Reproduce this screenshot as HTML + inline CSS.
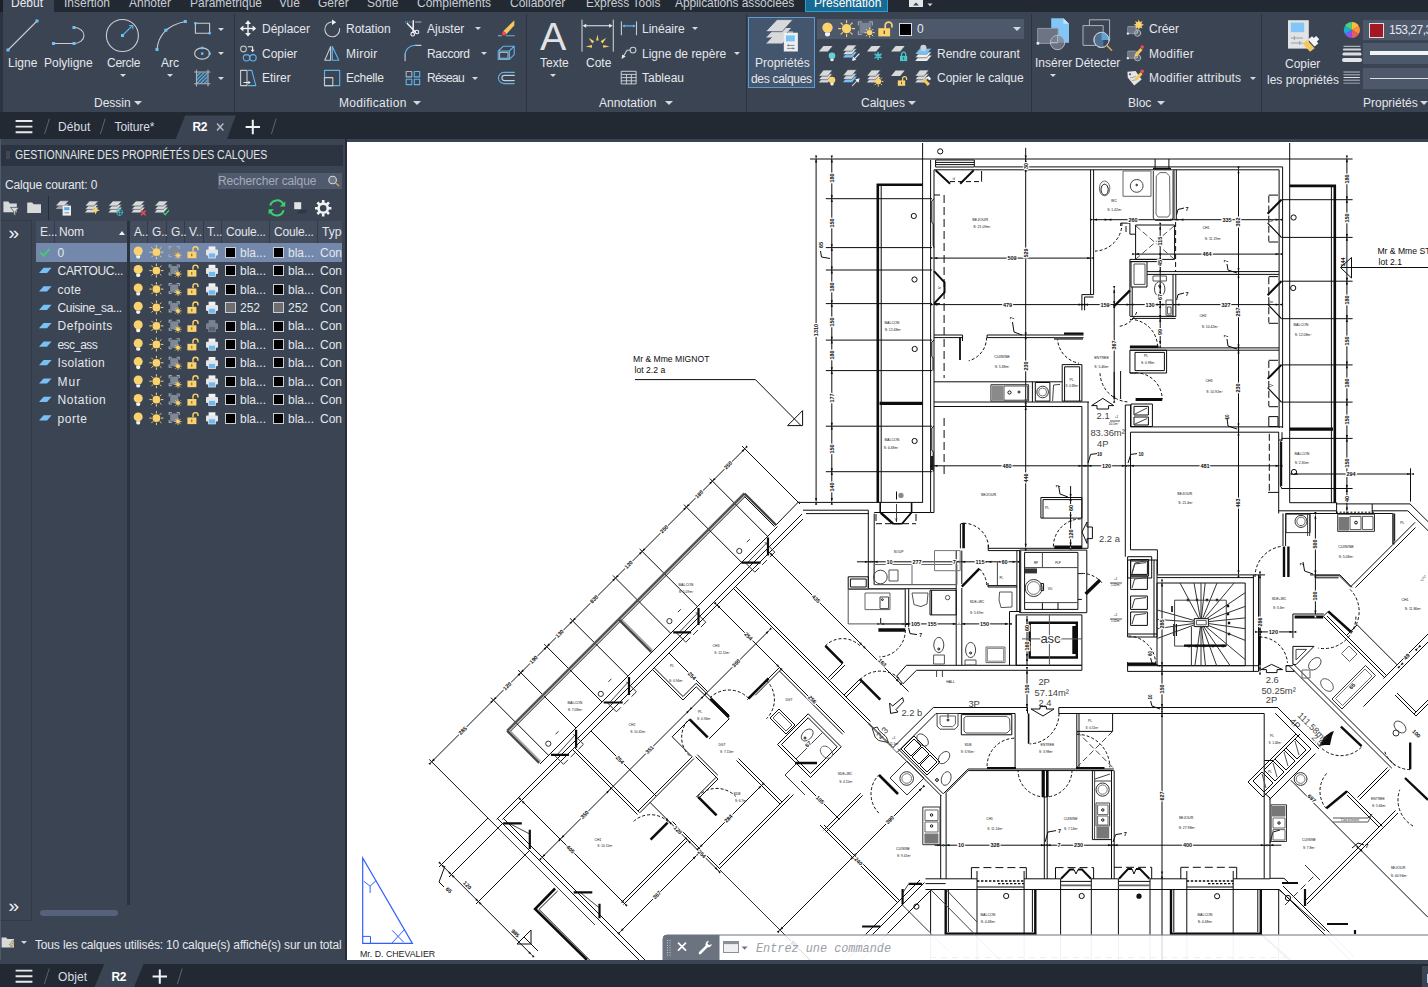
<!DOCTYPE html>
<html lang="fr">
<head>
<meta charset="utf-8">
<title>AutoCAD - R2</title>
<style>
*{box-sizing:border-box;margin:0;padding:0}
html,body{width:1428px;height:987px;overflow:hidden;background:#3b4453}
body{position:relative;font-family:"Liberation Sans",sans-serif;font-size:12px;color:#e4e7eb;line-height:14px}
.abs,.t,.ic{position:absolute}
.t{white-space:nowrap;height:14px;line-height:14px;margin-top:.35px}
#tabrow{position:absolute;left:0;top:0;width:1428px;height:12px;background:#222933;overflow:hidden}
#tabrow .t{top:-4.6px;color:#c9cdd3}
#ribbon{position:absolute;left:0;top:12px;width:1428px;height:100px;background:#3b4453}
#filebar{position:absolute;left:0;top:112px;width:1428px;height:27px;background:#222933}
#palette{position:absolute;left:0;top:139px;width:347px;height:821px;background:#3b4453}
#draw{position:absolute;left:347px;top:142px;width:1081px;height:818px;background:#fff;overflow:hidden}
#layoutbar{position:absolute;left:0;top:960px;width:1428px;height:27px;background:#222933}
.sep{position:absolute;width:1px;background:#2b3340}
.dd{position:absolute;width:0;height:0;border-left:3px solid transparent;border-right:3px solid transparent;border-top:3px solid #d5d9de}
.dd4{position:absolute;width:0;height:0;border-left:4px solid transparent;border-right:4px solid transparent;border-top:4px solid #d5d9de}
svg{position:absolute;overflow:visible}
</style>
</head>
<body>

<!-- ribbon tab row (cropped at top) -->
<div id="tabrow">
  <div class="abs" style="left:3px;top:0;width:51px;height:12px;background:#3b4453"></div>
  <div class="abs" style="left:0;top:0;width:3px;height:12px;background:#1b2028"></div>
  <span class="t" style="left:11px;color:#e8eaee">Début</span>
  <span class="t" style="left:64px">Insertion</span>
  <span class="t" style="left:129px">Annoter</span>
  <span class="t" style="left:190px">Paramétrique</span>
  <span class="t" style="left:279px">Vue</span>
  <span class="t" style="left:318px">Gérer</span>
  <span class="t" style="left:367px">Sortie</span>
  <span class="t" style="left:417px">Compléments</span>
  <span class="t" style="left:510px">Collaborer</span>
  <span class="t" style="left:586px">Express Tools</span>
  <span class="t" style="left:675px;letter-spacing:-.1px">Applications associées</span>
  <div class="abs" style="left:805px;top:-3px;width:83px;height:15px;background:#166a93;border:1px solid #2a9fd6"></div>
  <span class="t" style="left:814px;color:#fff">Présentation</span>
</div>

<div id="ribbon">
<div class="abs" id="rb" style="left:0;top:-12px;width:1428px;height:112px">
<!-- panel separators -->
<div class="sep" style="left:234px;top:14px;height:98px"></div>
<div class="sep" style="left:526px;top:14px;height:98px"></div>
<div class="sep" style="left:746px;top:14px;height:98px"></div>
<div class="sep" style="left:1031px;top:14px;height:98px"></div>
<div class="sep" style="left:1261px;top:14px;height:98px"></div>
<div class="abs" style="left:0;top:12px;width:3px;height:100px;background:#2b3340"></div>

<!-- Dessin -->
<span class="t" style="left:8px;top:56px">Ligne</span>
<span class="t" style="left:44px;top:56px">Polyligne</span>
<span class="t" style="left:107px;top:56px;letter-spacing:-0.25px">Cercle</span>
<span class="t" style="left:161px;top:56px">Arc</span>
<i class="dd" style="left:120px;top:74px"></i>
<i class="dd" style="left:167px;top:74px"></i>
<i class="dd" style="left:218px;top:28px"></i>
<i class="dd" style="left:218px;top:52px"></i>
<i class="dd" style="left:218px;top:77px"></i>
<span class="t" style="left:94px;top:96px">Dessin</span>
<i class="dd4" style="left:134px;top:101px"></i>

<!-- Modification -->
<span class="t" style="left:262px;top:22px">Déplacer</span>
<span class="t" style="left:262px;top:47px">Copier</span>
<span class="t" style="left:262px;top:71px">Etirer</span>
<span class="t" style="left:346px;top:22px">Rotation</span>
<span class="t" style="left:346px;top:47px;letter-spacing:0.25px">Miroir</span>
<span class="t" style="left:346px;top:71px;letter-spacing:-0.25px">Echelle</span>
<span class="t" style="left:427px;top:22px">Ajuster</span>
<span class="t" style="left:427px;top:47px;letter-spacing:-0.3px">Raccord</span>
<span class="t" style="left:427px;top:71px;letter-spacing:-0.75px">Réseau</span>
<i class="dd" style="left:475px;top:27px"></i>
<i class="dd" style="left:481px;top:52px"></i>
<i class="dd" style="left:472px;top:77px"></i>
<span class="t" style="left:339px;top:96px;letter-spacing:.3px">Modification</span>
<i class="dd4" style="left:413px;top:101px"></i>

<!-- Annotation -->
<span class="t" style="left:540px;top:56px">Texte</span>
<i class="dd" style="left:550px;top:74px"></i>
<span class="t" style="left:586px;top:56px">Cote</span>
<span class="t" style="left:642px;top:22px">Linéaire</span>
<span class="t" style="left:642px;top:47px">Ligne de repère</span>
<span class="t" style="left:642px;top:71px">Tableau</span>
<i class="dd" style="left:692px;top:27px"></i>
<i class="dd" style="left:734px;top:52px"></i>
<span class="t" style="left:599px;top:96px">Annotation</span>
<i class="dd4" style="left:665px;top:101px"></i>

<!-- Calques -->
<div class="abs" style="left:748px;top:17px;width:67px;height:71px;background:#44566e;border:1px solid #5b9bd1"></div>
<span class="t" style="left:755px;top:56px">Propriétés</span>
<span class="t" style="left:751px;top:72px;letter-spacing:-0.3px">des calques</span>
<div class="abs" style="left:817px;top:19px;width:207px;height:20px;background:#4d586b"></div>
<div class="abs" style="left:899px;top:23px;width:13px;height:13px;background:#000;border:1px solid #d9dce0"></div>
<span class="t" style="left:917px;top:22px">0</span>
<i class="dd4" style="left:1013px;top:27px"></i>
<span class="t" style="left:937px;top:47px">Rendre courant</span>
<span class="t" style="left:937px;top:71px">Copier le calque</span>
<span class="t" style="left:861px;top:96px">Calques</span>
<i class="dd4" style="left:908px;top:101px"></i>

<!-- Bloc -->
<span class="t" style="left:1035px;top:56px">Insérer</span>
<i class="dd" style="left:1050px;top:74px"></i>
<span class="t" style="left:1075px;top:56px">Détecter</span>
<span class="t" style="left:1149px;top:22px">Créer</span>
<span class="t" style="left:1149px;top:47px;letter-spacing:0.3px">Modifier</span>
<span class="t" style="left:1149px;top:71px;letter-spacing:0.2px">Modifier attributs</span>
<i class="dd" style="left:1250px;top:77px"></i>
<span class="t" style="left:1128px;top:96px">Bloc</span>
<i class="dd4" style="left:1157px;top:101px"></i>

<!-- Propriétés -->
<span class="t" style="left:1285px;top:57px">Copier</span>
<span class="t" style="left:1267px;top:73px">les propriétés</span>
<div class="abs" style="left:1363px;top:20px;width:70px;height:20px;background:#4d586b"></div>
<div class="abs" style="left:1369px;top:23px;width:15px;height:15px;background:#a31822;border:1px solid #d9dce0"></div>
<span class="t" style="left:1389px;top:23px;letter-spacing:-0.5px">153,27,30</span>
<div class="abs" style="left:1363px;top:43px;width:70px;height:21px;background:#4d586b"></div>
<div class="abs" style="left:1370px;top:51px;width:60px;height:4px;background:#f2f3f5"></div>
<div class="abs" style="left:1363px;top:68px;width:70px;height:21px;background:#4d586b"></div>
<div class="abs" style="left:1370px;top:78px;width:60px;height:1px;background:#d9dce0"></div>
<span class="t" style="left:1363px;top:96px">Propriétés</span>
<i class="dd4" style="left:1420px;top:101px"></i>

<svg width="1428" height="112" style="left:0;top:0" viewBox="0 0 1428 112" fill="none" stroke-linecap="round" stroke-linejoin="round">
<defs>
<pattern id="hat" width="2.6" height="2.6" patternUnits="userSpaceOnUse" patternTransform="rotate(-45)"><rect width="2.6" height="1.3" fill="#5fb4ec"/></pattern>
</defs>
<g id="dessin" stroke="#c9cdd3" stroke-width="1.1">
  <path d="M8 50 L37 21"/>
  <path d="M53.5 43.5 H74 A10 8 0 0 0 74 27.5"/>
  <circle cx="122.4" cy="35.5" r="16"/>
  <path d="M122.4 35.5 L132 26" stroke="#5fb4ec"/>
  <path d="M129.5 25.5 h3.3 v3.3" stroke="#5fb4ec"/>
  <path d="M157 49.5 Q159 27 185.3 21.5"/>
  <rect x="195.4" y="23.2" width="14.2" height="10"/>
  <ellipse cx="202.1" cy="53.5" rx="7.5" ry="5.6"/>
  <rect x="197" y="72.5" width="10.5" height="11" fill="url(#hat)" stroke="none"/>
  <path d="M196.5 70 V86 M208 70 V86 M194.5 72 H210 M194.5 83.8 H210" stroke="#aeb3bb"/>
</g>
<g id="grips" fill="#6cc2f7" stroke="none">
  <rect x="6.5" y="48.5" width="3" height="3"/><rect x="35.5" y="19.5" width="3" height="3"/>
  <rect x="52" y="42" width="3" height="3"/><rect x="72.5" y="42" width="3" height="3"/><rect x="72.5" y="26" width="3" height="3"/>
  <rect x="121" y="34" width="3" height="3"/>
  <rect x="155.5" y="48" width="3" height="3"/><rect x="164.3" y="28.7" width="3" height="3"/><rect x="183.8" y="20" width="3" height="3"/>
  <rect x="194.2" y="22" width="2.4" height="2.4"/><rect x="208.4" y="32" width="2.4" height="2.4"/>
  <rect x="201" y="52.4" width="2.4" height="2.4"/><rect x="208.4" y="52.4" width="2.4" height="2.4"/><rect x="201" y="46.8" width="2.4" height="2.4"/>
</g>
<g id="modif" stroke-width="1.1">
  <!-- move -->
  <g fill="#f1f2f4" stroke="none">
    <rect x="247.3" y="22.5" width="1.4" height="12"/><rect x="242" y="27.8" width="12" height="1.4"/>
    <path d="M248 20.3 l3 3.6 h-6z M248 36.5 l3 -3.6 h-6z M239.8 28.5 l3.6 -3 v6z M256.2 28.5 l-3.6 -3 v6z"/>
  </g>
  <!-- copy -->
  <circle cx="243.5" cy="49" r="2.9" stroke="#b9bec6"/>
  <path d="M248.3 46.8 H252.6 V50.5" stroke="#e8eaed"/>
  <path d="M252.6 52.3 l-2 -2.6 h4z" fill="#e8eaed" stroke="none"/>
  <circle cx="246.5" cy="57.8" r="3.2" stroke="#5fb4ec"/><circle cx="253" cy="57.8" r="3.2" stroke="#5fb4ec"/>
  <!-- stretch -->
  <path d="M240.6 70.4 H247 V85.6 H240.6 Z" stroke="#c9cdd3"/>
  <path d="M248.4 70.4 H251.8 L255.8 85.6 H248.4" stroke="#5fb4ec"/>
  <path d="M244 82.5 H249" stroke="#e8eaed"/><path d="M250.8 82.5 l-2.4 -1.8 v3.6z" fill="#e8eaed" stroke="none"/>
  <!-- rotate -->
  <path d="M339.6 28.6 A7.4 7.4 0 1 1 332.3 22" stroke="#c9cdd3"/>
  <path d="M332 19.6 l4.2 2.6 -4.2 2.8z" fill="#f1f2f4" stroke="none"/>
  <!-- mirror -->
  <path d="M330.6 46.6 V60.2 H324.8 Z" stroke="#c9cdd3"/>
  <path d="M332.3 46.6 V60.2 H338.8 Z" stroke="#5fb4ec"/>
  <!-- scale -->
  <rect x="324.5" y="70.4" width="15.2" height="15.2" stroke="#5fb4ec"/>
  <rect x="324.5" y="77.6" width="8.3" height="8" stroke="#c9cdd3" fill="#3b4453"/>
  <!-- trim -->
  <path d="M405 22 H411.5" stroke="#5fb4ec" stroke-dasharray="1.2 0.8" stroke-linecap="butt"/>
  <path d="M415.6 22 H421" stroke="#aeb3bb"/>
  <path d="M407.3 23.6 L415.6 32.2 M413.3 20.8 L413.1 32.2" stroke="#f1f2f4" stroke-width="1.5"/>
  <circle cx="412.7" cy="34.2" r="1.8" stroke="#f1f2f4"/><circle cx="417" cy="32" r="1.8" stroke="#f1f2f4"/>
  <!-- fillet -->
  <path d="M415.2 45.4 H421 M405.1 54.5 V60.8" stroke="#c9cdd3"/>
  <path d="M415.2 45.4 A10 9 0 0 0 405.1 54.5" stroke="#5fb4ec"/>
  <!-- array -->
  <rect x="406.2" y="71.5" width="5.6" height="5.4" stroke="#aeb3bb"/>
  <rect x="414.3" y="71.5" width="5.4" height="5.4" stroke="#5fb4ec"/>
  <rect x="406.2" y="79.2" width="5.6" height="5.4" stroke="#5fb4ec"/>
  <rect x="414.3" y="79.2" width="5.4" height="5.4" stroke="#5fb4ec"/>
  <!-- erase -->
  <path d="M514.3 20.2 V25.6 L506.2 34.2 L503.2 31.2 Z" fill="#f5c85a" stroke="none"/>
  <circle cx="504" cy="33.4" r="2" fill="#ef4a55" stroke="none"/>
  <path d="M498.4 35.8 H501.4" stroke="#aeb3bb"/><path d="M506.2 35.8 H514.3" stroke="#5fb4ec"/>
  <!-- box -->
  <path d="M498.2 51 L503.4 46.2 H514.2 V54.6 L509.4 59.4 H498.2 Z M509.4 59.4 V51 H498.2 M509.4 51 L514.2 46.2" stroke="#5fb4ec"/>
  <rect x="499.6" y="52.4" width="8.4" height="5.8" stroke="#aeb3bb"/>
  <!-- offset -->
  <path d="M514.3 72.4 H504 A5.6 5.6 0 0 0 504 83.6 H514.3" stroke="#5fb4ec"/>
  <path d="M514.3 75.4 H504.5 A2.6 2.6 0 0 0 504.5 80.6 H514.3" stroke="#c9cdd3"/>
</g>
<g id="annot" stroke-width="1.1">
  <!-- cote -->
  <path d="M582 20 V51.3 M613.3 20 V51.3" stroke="#c9cdd3"/>
  <path d="M585 25.8 H610.5" stroke="#e8eaed"/>
  <path d="M582.6 25.8 l3.6 -2 v4z M612.7 25.8 l-3.6 -2 v4z" fill="#e8eaed" stroke="none"/>
  <g fill="#f7cf62" stroke="none">
    <path d="M597.4 34.6 l1.3 6 h-2.6z"/>
    <path d="M588.6 37.8 l5.6 3.4 -2 2.2z"/><path d="M606.2 37.8 l-5.6 3.4 2 2.2z"/>
    <path d="M585.6 46.4 l6.4 -1.4 v2.8z"/><path d="M609.6 46.4 l-6.4 -1.4 v2.8z"/>
  </g>
  <!-- lineaire -->
  <path d="M621.4 21.8 V34.8 M636.5 21.8 V34.8" stroke="#c9cdd3"/>
  <path d="M623.5 25.9 H634.5" stroke="#5fb4ec"/>
  <path d="M622.2 25.9 l2.6 -1.5 v3z M635.7 25.9 l-2.6 -1.5 v3z" fill="#5fb4ec" stroke="none"/>
  <!-- leader -->
  <circle cx="633" cy="50.1" r="2.9" stroke="#c9cdd3"/>
  <path d="M630 50.3 H627 L623.6 56" stroke="#c9cdd3"/>
  <path d="M621.6 59 l0.6 -4.6 3.4 2.2z" fill="#e8eaed" stroke="none"/>
  <!-- table -->
  <g stroke="#c9cdd3" stroke-width="1">
  <rect x="621.6" y="71.3" width="14.5" height="12.6"/>
  <path d="M621.6 74.4 H636 M621.6 77.6 H636 M621.6 80.8 H636 M626.4 74.4 V83.8 M631.3 74.4 V83.8"/>
  </g>
</g>
<g id="calq" stroke="none">
  <!-- layer properties big icon -->
  <g fill="#d8d9db">
    <path d="M765.8 43.6 l9 -9.6 h16.4 l-9 9.6z"/>
    <path d="M765.8 37.6 l9 -9.6 h16.4 l-9 9.6z"/>
    <path d="M765.8 31.4 l11.2 -11.8 h16 l-10.6 11.8z" stroke="#44566e" stroke-width=".8"/>
  </g>
  <path d="M765.8 37.6 l5.6 -6 M765.8 43.6 l5.6 -6" stroke="#44566e" stroke-width=".8"/>
  <rect x="783.8" y="32.7" width="14.1" height="18.8" fill="#eceef0"/>
  <rect x="788" y="31.4" width="5" height="1.6" fill="#b8bcc3"/>
  <rect x="786" y="35.4" width="8.8" height="6" fill="#79c2f8"/>
  <path d="M787.4 45.4 H794.2 M787.4 48.4 H794.2" stroke="#6b7280" stroke-width=".8"/>
  <path d="M787.2 45.4 l1.8 -1.2 v2.4z M794.4 48.4 l-1.8 -1.2 v2.4z" fill="#6b7280"/>
  <!-- dropdown row: bulb, sun, vp-freeze, lock -->
  <circle cx="827.5" cy="27.6" r="5.2" fill="#fbd36e"/>
  <path d="M825 32.6 h5 v2 a2.5 2 0 0 1 -5 0z" fill="#f1f2f4"/>
  <g id="sunL"><circle cx="846.6" cy="28.6" r="4.7" fill="#fbd36e"/>
  <path d="M846.6 20.6 v2.2 M846.6 34.4 v2.2 M838.6 28.6 h2.2 M852.4 28.6 h2.2 M841 23 l1.6 1.6 M850.6 32.6 l1.6 1.6 M852.2 23 l-1.6 1.6 M842.6 32.6 l-1.6 1.6" stroke="#fbd36e" stroke-width="1.1" stroke-linecap="round"/></g>
  <rect x="859.6" y="22.8" width="11.6" height="10.6" fill="#7b8392"/>
  <path d="M858.4 25 V21.8 H861.6 M869.2 21.8 H872.4 V25 M858.4 31.4 V34.5 H861.6" stroke="#9aa1ad" stroke-width="1.2" fill="none"/>
  <circle cx="869.6" cy="32.6" r="2.7" fill="#fbd36e"/>
  <path d="M869.6 28 v1.2 M869.6 36 v1.2 M865 32.6 h1.2 M873 32.6 h1.2 M866.4 29.4 l.9 .9 M872 35 l.9 .9 M872.9 29.4 l-.9 .9 M867.2 35 l-.9 .9" stroke="#fbd36e" stroke-width="1" stroke-linecap="round"/>
  <rect x="878.3" y="28.2" width="11.8" height="8.2" fill="#fbd36e"/>
  <rect x="883.6" y="30.6" width="1.3" height="3.4" fill="#5a5030"/>
  <path d="M885.2 28 V25.6 A3.4 3.4 0 0 1 892 25.6 V26.8" stroke="#fbd36e" stroke-width="1.7" fill="none"/>
  <!-- row 2 -->
  <path d="M818.8 51.5 l4.6 -5.6 h9.1 l-4.6 5.6z" fill="#d8d9db"/>
  <circle cx="832" cy="55.7" r="3.3" fill="#5fd3d8"/><path d="M830.4 58.8 h3.2 v1.2 a1.6 1.2 0 0 1 -3.2 0z" fill="#f1f2f4"/>
  <g id="stk2"><path d="M843 57.6 l4.6 -5.6 h9.1 l-4.6 5.6z" fill="#79c2f8"/><path d="M843 54.4 l4.6 -5.6 h9.1 l-4.6 5.6z" fill="#d8d9db" stroke="#3b4453" stroke-width=".6"/><path d="M843 50.9 l4.6 -5.8 h9.1 l-4.6 5.8z" fill="#d8d9db" stroke="#3b4453" stroke-width=".6"/></g>
  <path d="M859 54 L853.6 59.6" stroke="#e8eaed" stroke-width="1.1"/><path d="M852 61 l1 -4.4 3.4 3.2z" fill="#e8eaed"/>
  <path d="M866.9 51.5 l4.6 -5.6 h9.1 l-4.6 5.6z" fill="#d8d9db"/>
  <path d="M878.1 52.4 v7 M875 54.2 l6.2 3.6 M881.2 54.2 l-6.2 3.6" stroke="#49c5cd" stroke-width="1.4"/><circle cx="878.1" cy="55.9" r="2" fill="none" stroke="#49c5cd" stroke-width="1"/>
  <path d="M891 51.5 l4.6 -5.6 h9.1 l-4.6 5.6z" fill="#d8d9db"/>
  <rect x="900" y="55.9" width="7.2" height="5.2" fill="#49c5cd"/><path d="M901.6 55.8 V54.2 A2 2 0 0 1 905.6 54.2 V55.8" stroke="#49c5cd" stroke-width="1.2" fill="none"/><rect x="903.2" y="57.2" width=".9" height="2.4" fill="#24545a"/>
  <path d="M915.2 60.9 l4.5 -5.5 h11.9 l-4.6 5.5z" fill="#eceef0"/><path d="M915.2 57.5 l4.5 -5.5 h11.9 l-4.6 5.5z" fill="#eceef0" stroke="#3b4453" stroke-width=".6"/><path d="M915.2 54.1 l4.5 -5.5 h11.9 l-4.6 5.5z" fill="#79c2f8" stroke="#3b4453" stroke-width=".4"/>
  <circle cx="923.4" cy="47.9" r="3.1" fill="#d0d2d5"/>
  <!-- row 3 -->
  <g id="stk3"><path d="M818.8 82.6 l4.6 -5.6 h9.1 l-4.6 5.6z" fill="#d8d9db"/><path d="M818.8 79.4 l4.6 -5.6 h9.1 l-4.6 5.6z" fill="#d8d9db" stroke="#3b4453" stroke-width=".6"/><path d="M818.8 75.9 l4.6 -5.8 h9.1 l-4.6 5.8z" fill="#d8d9db" stroke="#3b4453" stroke-width=".6"/></g>
  <circle cx="832" cy="80" r="3.3" fill="#fbd36e"/><path d="M830.4 83.1 h3.2 v1.2 a1.6 1.2 0 0 1 -3.2 0z" fill="#f1f2f4"/>
  <use href="#stk2" y="24.6"/>
  <path d="M852.4 85.6 L858 79.8" stroke="#c9cdd3" stroke-width="1.1"/><path d="M859.6 78.2 l-1 4.6 -3.6 -3.4z" fill="#f1f2f4"/>
  <use href="#stk3" x="48.1"/>
  <circle cx="878.3" cy="81.4" r="2.8" fill="#fbd36e"/>
  <path d="M878.3 76.6 v1.3 M878.3 84.9 v1.3 M873.5 81.4 h1.3 M881.8 81.4 h1.3 M874.9 78 l.9 .9 M880.8 83.9 l.9 .9 M881.7 78 l-.9 .9 M875.8 83.9 l-.9 .9" stroke="#fbd36e" stroke-width="1" stroke-linecap="round"/>
  <path d="M891 76.1 l4.6 -5.6 h9.1 l-4.6 5.6z" fill="#d8d9db"/>
  <rect x="897.8" y="80.4" width="7.4" height="5.4" fill="#fbd36e"/><path d="M902.6 80.3 V78.6 A2 2 0 0 1 906.6 78.6 V79.4" stroke="#fbd36e" stroke-width="1.2" fill="none"/><rect x="901" y="81.8" width=".9" height="2.4" fill="#5a5030"/>
  <use href="#stk3" x="96.4"/>
  <path d="M922.4 80.2 l2.2 -2 5.4 5.6 -2.4 2.2z" fill="#f5c85a"/><path d="M926.6 77.4 l2.2 -1.4 2.4 3 -2 1.2z" fill="#f1f2f4"/>
</g>
<text x="540" y="49.5" font-family="Liberation Sans, sans-serif" font-size="39.4" fill="#e1e2e4" stroke="none">A</text>
<g id="bloc" stroke-width="1">
  <!-- inserer -->
  <path d="M1051.2 18.2 H1063.4 L1069 23.8 V42.8 H1051.2 Z" fill="#82c6f8" stroke="none"/>
  <path d="M1063.4 18.2 V23.8 H1069 Z" fill="#c4e4fb" stroke="none"/>
  <rect x="1038" y="28.4" width="20" height="15" fill="#6d7483" stroke="#9097a3"/>
  <circle cx="1057.6" cy="42.5" r="7.2" fill="#7b8290" fill-opacity=".75" stroke="#b4b9c1"/>
  <path d="M1050.4 42.5 H1057.6 V35.3" stroke="#b4b9c1" fill="none"/>
  <rect x="1036.6" y="42" width="2.6" height="2.6" fill="#f1f2f4" stroke="none"/>
  <!-- detecter -->
  <rect x="1089.8" y="19.8" width="19.8" height="20.6" stroke="#aeb3bb" fill="#3b4453"/>
  <rect x="1083.4" y="25.6" width="19.8" height="19.8" stroke="#aeb3bb" fill="#444c5b"/>
  <path d="M1107 45.6 L1111.6 50.2" stroke="#d9a64e" stroke-width="1.6"/>
  <circle cx="1101.5" cy="39.9" r="7.6" fill="#4f6f93" stroke="#c4c8ce"/>
  <path d="M1101.5 39.9 H1109.1 A7.6 7.6 0 0 0 1101.5 32.3 Z" fill="#5fa3dc" stroke="none"/>
  <path d="M1103.4 39.9 V46.8 A7.6 7.6 0 0 0 1108.8 39.9 Z" fill="#3f4757" stroke="none"/>
  <circle cx="1101.5" cy="39.9" r="7.6" fill="none" stroke="#c4c8ce"/>
  <!-- creer -->
  <g id="blk"><rect x="1128.2" y="26.6" width="8.4" height="7" fill="#6d7483" stroke="#9097a3"/>
  <circle cx="1137.6" cy="33.2" r="3.1" fill="#6d7483" fill-opacity=".6" stroke="#aeb3bb"/>
  <path d="M1134.5 33.2 H1137.6 V30.1" stroke="#aeb3bb" fill="none"/>
  <rect x="1126.8" y="32.6" width="2" height="2" fill="#f1f2f4" stroke="none"/></g>
  <path d="M1138.8 19.6 l1.1 2.6 2.6 -1.1 -1.1 2.6 2.6 1.1 -2.6 1.1 1.1 2.6 -2.6 -1.1 -1.1 2.6 -1.1 -2.6 -2.6 1.1 1.1 -2.6 -2.6 -1.1 2.6 -1.1 -1.1 -2.6 2.6 1.1z" fill="#fbd36e" stroke="none"/>
  <!-- modifier -->
  <use href="#blk" y="24.6"/>
  <g id="pcl"><path d="M1135 54 l5.4 -6 2.2 2 -5.4 6 -2.8 .8z" fill="#f5c85a" stroke="none"/><circle cx="1142.2" cy="47" r="1.8" fill="#ef4a55" stroke="none"/></g>
  <!-- modifier attributs -->
  <path d="M1127.4 71.8 L1135.6 71 L1141.6 79.6 L1134.2 85.6 L1127.8 77.4 Z" fill="#e4e5e7" stroke="none"/>
  <circle cx="1130" cy="74.2" r="1" fill="#3b4453" stroke="none"/>
  <path d="M1130.4 78 l5 -1.4 M1132.4 80.6 l5 -1.4" stroke="#8d939e" stroke-width=".8"/>
  <use href="#pcl" y="24.2"/>
</g>
<g id="props">
  <!-- copier les proprietes -->
  <rect x="1288" y="20.2" width="20.8" height="28.4" fill="#e2e3e5" stroke="none"/>
  <rect x="1290.8" y="22.6" width="13.4" height="9.6" fill="#82c6f8" stroke="none"/>
  <path d="M1291.4 38 H1302.4 M1291.4 43 H1302.4 M1294.4 36.4 v3.2 M1299.8 41.4 v3.2" stroke="#9097a3" stroke-width=".9"/>
  <path d="M1302.6 43.6 l4.4 -3.6 7.6 8.2 -4.6 3.6z" fill="#f5c85a" stroke="none"/>
  <path d="M1308.2 39.4 l3.8 -3.2 1.8 1.8 2.4 -2 3 3.2 -2.4 2.2 1.6 2 -4 3.2z" fill="#f4f5f6" stroke="none"/>
  <!-- colour wheel -->
  <g stroke="none">
  <path d="M1351.9 29.9 L1351.9 21.9 A8 8 0 0 1 1358.83 25.9 Z" fill="#fdbb3c"/>
  <path d="M1351.9 29.9 L1358.83 25.9 A8 8 0 0 1 1358.83 33.9 Z" fill="#fd8f3f"/>
  <path d="M1351.9 29.9 L1358.83 33.9 A8 8 0 0 1 1351.9 37.9 Z" fill="#e85c5c"/>
  <path d="M1351.9 29.9 L1351.9 37.9 A8 8 0 0 1 1344.97 33.9 Z" fill="#8a52f0"/>
  <path d="M1351.9 29.9 L1344.97 33.9 A8 8 0 0 1 1344.97 25.9 Z" fill="#19aed0"/>
  <path d="M1351.9 29.9 L1344.97 25.9 A8 8 0 0 1 1351.9 21.9 Z" fill="#4fcf80"/>
  </g>
  <g transform="rotate(-30 1351.9 29.9)"></g>
  <!-- lineweight -->
  <path d="M1344 46.3 H1360" stroke="#c9cdd3" stroke-width="1"/>
  <path d="M1344 49.5 H1360" stroke="#d5d7db" stroke-width="2.2"/>
  <path d="M1344 54 H1360" stroke="#dedfe2" stroke-width="3.2"/>
  <path d="M1344 60 H1360" stroke="#e4e5e7" stroke-width="4"/>
  <!-- linetype -->
  <path d="M1344 72 H1359.4" stroke="#8f96a2" stroke-width="1.4" stroke-dasharray="1.2 1"/>
  <path d="M1344 74.8 H1359.4" stroke="#8f96a2" stroke-width="1.4" stroke-dasharray="2 .8"/>
  <path d="M1344 77.5 H1359.4" stroke="#e4e5e7" stroke-width="1"/>
  <path d="M1344 80.2 H1359.4" stroke="#8f96a2" stroke-width="1.6" stroke-dasharray="2.6 .8"/>
  <path d="M1344 83.2 H1359.4" stroke="#7d8491" stroke-width="1.6"/>
</g>
<!-- tiny tab-row icon -->
<rect x="909" y="0" width="14" height="7" fill="#e4e5e7" stroke="none"/>
<path d="M913 5.5 l3 -3 3 3z" fill="#3b4453" stroke="none"/>
<path d="M927.5 3.5 l2.5 2.8 2.5 -2.8z" fill="#d5d9de" stroke="none"/>



</svg>

</div>

</div>

<div id="filebar">
<div class="abs" style="left:0;top:-112px;width:1428px;height:139px">
<svg width="400" height="139" viewBox="0 0 400 139" style="left:0;top:0" fill="none">
<path d="M175.6 139 L185.2 115.4 H235.8 L227 139 Z" fill="#3b4453"/>
<path d="M15.6 121 H32.4 M15.6 126.6 H32.4 M15.6 132.2 H32.4" stroke="#e8eaed" stroke-width="1.9"/>
<path d="M44.6 134 L49.4 118.6 M100.4 134 L105.2 118.6 M271.4 134 L276.2 118.6" stroke="#5b6473" stroke-width="1"/>
<path d="M217 123.4 l6.4 7 M223.4 123.4 l-6.4 7" stroke="#b4b9c1" stroke-width="1.5"/>
<path d="M245.6 127 H260 M252.8 119.8 V134.2" stroke="#f1f2f4" stroke-width="2"/>
</svg>
<span class="t" style="left:58px;top:120px;color:#d9dce1;letter-spacing:.1px">Début</span>
<span class="t" style="left:114.5px;top:120px;color:#d9dce1;letter-spacing:-.1px">Toiture*</span>
<span class="t" style="left:192.6px;top:120px;color:#fff;font-weight:bold;letter-spacing:-.5px">R2</span>
</div>

</div>

<div id="palette">
<div class="abs" id="pal" style="left:0;top:-139px;width:347px;height:960px">
<div class="abs" style="left:1px;top:145px;width:342px;height:21px;background:#2c3441"></div>
<div class="abs" style="left:0;top:139px;width:1px;height:821px;background:#50596a"></div>
<div class="abs" style="left:345px;top:139px;width:2px;height:821px;background:#262d38"></div>
<span class="t" style="left:15px;top:148px;transform:scaleX(.876);transform-origin:0 0;color:#e1e4e8">GESTIONNAIRE DES PROPRIÉTÉS DES CALQUES</span>
<span class="t" style="left:5px;top:178px;letter-spacing:-.15px">Calque courant: 0</span>
<div class="abs" style="left:218px;top:173px;width:124px;height:16px;background:#4f5a6e"></div>
<span class="t" style="left:218px;top:174px;color:#a4abb7;letter-spacing:-.15px">Rechercher calque</span>
<div class="abs" style="left:48px;top:196px;width:1px;height:24px;background:#262d38"></div>
<div class="abs" style="left:1px;top:220px;width:31px;height:701px;border-right:1px solid #323a47;border-top:1px solid #323a47;border-bottom:1px solid #323a47"></div>
<span class="t" style="left:8.4px;top:222.6px;font-size:19px;line-height:20px;height:20px;color:#f1f2f4">»</span>
<span class="t" style="left:8.4px;top:896px;font-size:19px;line-height:20px;height:20px;color:#f1f2f4">»</span>
<div class="abs" style="left:36px;top:221px;width:91px;height:22px;background:#434d5e"></div>
<div class="abs" style="left:130px;top:221px;width:212px;height:22px;background:#434d5e"></div>
<div class="abs" style="left:127px;top:221px;width:3px;height:684px;background:#2b3340"></div>
<div class="abs" style="left:54px;top:221px;width:1px;height:22px;background:#343c49"></div>
<div class="abs" style="left:147px;top:221px;width:1px;height:22px;background:#343c49"></div>
<div class="abs" style="left:166px;top:221px;width:1px;height:22px;background:#343c49"></div>
<div class="abs" style="left:184px;top:221px;width:1px;height:22px;background:#343c49"></div>
<div class="abs" style="left:203px;top:221px;width:1px;height:22px;background:#343c49"></div>
<div class="abs" style="left:221px;top:221px;width:1px;height:22px;background:#343c49"></div>
<div class="abs" style="left:269px;top:221px;width:1px;height:22px;background:#343c49"></div>
<div class="abs" style="left:317px;top:221px;width:1px;height:22px;background:#343c49"></div>
<span class="t" style="left:40px;top:225px;letter-spacing:-.2px">E...</span>
<span class="t" style="left:59px;top:225px;letter-spacing:-.2px">Nom</span>
<span class="t" style="left:134px;top:225px;letter-spacing:-.2px">A..</span>
<span class="t" style="left:152px;top:225px;letter-spacing:-.2px">G..</span>
<span class="t" style="left:171px;top:225px;letter-spacing:-.2px">G..</span>
<span class="t" style="left:189px;top:225px;letter-spacing:-.2px">V..</span>
<span class="t" style="left:207px;top:225px;letter-spacing:-.2px">T...</span>
<span class="t" style="left:226px;top:225px;letter-spacing:-.2px">Coule...</span>
<span class="t" style="left:274px;top:225px;letter-spacing:-.2px">Coule...</span>
<div class="abs" style="left:322px;top:225px;width:20px;height:14px;overflow:hidden"><span class="t" style="left:0;top:0">Type</span></div>
<i class="abs" style="left:119px;top:231px;width:0;height:0;border-left:3.5px solid transparent;border-right:3.5px solid transparent;border-bottom:4px solid #f1f2f4"></i>
<div class="abs" style="left:36px;top:243px;width:91px;height:19px;background:#7388ab"></div>
<div class="abs" style="left:130px;top:243px;width:212px;height:19px;background:#7388ab"></div>
<span class="t" style="left:57.6px;top:245.4px;letter-spacing:0px">0</span>
<div class="abs" style="left:225px;top:246.8px;width:11px;height:11px;background:#000;border:1px solid #c9cdd3"></div>
<div class="abs" style="left:273px;top:246.8px;width:11px;height:11px;background:#000;border:1px solid #c9cdd3"></div>
<span class="t" style="left:240px;top:245.4px">bla...</span>
<span class="t" style="left:288px;top:245.4px">bla...</span>
<span class="t" style="left:320px;top:245.4px">Con</span>
<span class="t" style="left:57.6px;top:263.8px;letter-spacing:-0.35px">CARTOUC...</span>
<div class="abs" style="left:225px;top:265.2px;width:11px;height:11px;background:#000;border:1px solid #c9cdd3"></div>
<div class="abs" style="left:273px;top:265.2px;width:11px;height:11px;background:#000;border:1px solid #c9cdd3"></div>
<span class="t" style="left:240px;top:263.8px">bla...</span>
<span class="t" style="left:288px;top:263.8px">bla...</span>
<span class="t" style="left:320px;top:263.8px">Con</span>
<span class="t" style="left:57.6px;top:282.3px;letter-spacing:0.2px">cote</span>
<div class="abs" style="left:225px;top:283.7px;width:11px;height:11px;background:#000;border:1px solid #c9cdd3"></div>
<div class="abs" style="left:273px;top:283.7px;width:11px;height:11px;background:#000;border:1px solid #c9cdd3"></div>
<span class="t" style="left:240px;top:282.3px">bla...</span>
<span class="t" style="left:288px;top:282.3px">bla...</span>
<span class="t" style="left:320px;top:282.3px">Con</span>
<span class="t" style="left:57.6px;top:300.7px;letter-spacing:-0.4px">Cuisine_sa...</span>
<div class="abs" style="left:225px;top:302.1px;width:11px;height:11px;background:#6e6e6e;border:1px solid #c9cdd3"></div>
<div class="abs" style="left:273px;top:302.1px;width:11px;height:11px;background:#6e6e6e;border:1px solid #c9cdd3"></div>
<span class="t" style="left:240px;top:300.7px">252</span>
<span class="t" style="left:288px;top:300.7px">252</span>
<span class="t" style="left:320px;top:300.7px">Con</span>
<span class="t" style="left:57.6px;top:319.1px;letter-spacing:0.5px">Defpoints</span>
<div class="abs" style="left:225px;top:320.5px;width:11px;height:11px;background:#000;border:1px solid #c9cdd3"></div>
<div class="abs" style="left:273px;top:320.5px;width:11px;height:11px;background:#000;border:1px solid #c9cdd3"></div>
<span class="t" style="left:240px;top:319.1px">bla...</span>
<span class="t" style="left:288px;top:319.1px">bla...</span>
<span class="t" style="left:320px;top:319.1px">Con</span>
<span class="t" style="left:57.6px;top:337.6px;letter-spacing:-0.65px">esc_ass</span>
<div class="abs" style="left:225px;top:338.9px;width:11px;height:11px;background:#000;border:1px solid #c9cdd3"></div>
<div class="abs" style="left:273px;top:338.9px;width:11px;height:11px;background:#000;border:1px solid #c9cdd3"></div>
<span class="t" style="left:240px;top:337.6px">bla...</span>
<span class="t" style="left:288px;top:337.6px">bla...</span>
<span class="t" style="left:320px;top:337.6px">Con</span>
<span class="t" style="left:57.6px;top:356.0px;letter-spacing:0.3px">Isolation</span>
<div class="abs" style="left:225px;top:357.4px;width:11px;height:11px;background:#000;border:1px solid #c9cdd3"></div>
<div class="abs" style="left:273px;top:357.4px;width:11px;height:11px;background:#000;border:1px solid #c9cdd3"></div>
<span class="t" style="left:240px;top:356.0px">bla...</span>
<span class="t" style="left:288px;top:356.0px">bla...</span>
<span class="t" style="left:320px;top:356.0px">Con</span>
<span class="t" style="left:57.6px;top:374.4px;letter-spacing:1px">Mur</span>
<div class="abs" style="left:225px;top:375.8px;width:11px;height:11px;background:#000;border:1px solid #c9cdd3"></div>
<div class="abs" style="left:273px;top:375.8px;width:11px;height:11px;background:#000;border:1px solid #c9cdd3"></div>
<span class="t" style="left:240px;top:374.4px">bla...</span>
<span class="t" style="left:288px;top:374.4px">bla...</span>
<span class="t" style="left:320px;top:374.4px">Con</span>
<span class="t" style="left:57.6px;top:392.8px;letter-spacing:0.5px">Notation</span>
<div class="abs" style="left:225px;top:394.2px;width:11px;height:11px;background:#000;border:1px solid #c9cdd3"></div>
<div class="abs" style="left:273px;top:394.2px;width:11px;height:11px;background:#000;border:1px solid #c9cdd3"></div>
<span class="t" style="left:240px;top:392.8px">bla...</span>
<span class="t" style="left:288px;top:392.8px">bla...</span>
<span class="t" style="left:320px;top:392.8px">Con</span>
<span class="t" style="left:57.6px;top:411.3px;letter-spacing:0.5px">porte</span>
<div class="abs" style="left:225px;top:412.7px;width:11px;height:11px;background:#000;border:1px solid #c9cdd3"></div>
<div class="abs" style="left:273px;top:412.7px;width:11px;height:11px;background:#000;border:1px solid #c9cdd3"></div>
<span class="t" style="left:240px;top:411.3px">bla...</span>
<span class="t" style="left:288px;top:411.3px">bla...</span>
<span class="t" style="left:320px;top:411.3px">Con</span>
<div class="abs" style="left:40px;top:910px;width:78px;height:6px;border-radius:3px;background:#56627a"></div>
<span class="t" style="left:35px;top:937.5px;letter-spacing:-.16px">Tous les calques utilisés: 10 calque(s) affiché(s) sur un total</span>
<i class="dd" style="left:21px;top:941px"></i>
<svg width="347" height="960" viewBox="0 0 347 960" style="left:0;top:0" fill="none">
<defs>
<g id="i-bulb"><circle cx="0" cy="-1" r="4.5" fill="#fbd36e"/><path d="M-2 3.4 h4 v1.6 a2 1.6 0 0 1 -4 0z" fill="#f1f2f4"/></g>
<g id="i-sun"><circle r="3.9" fill="#fbd36e"/><path d="M0 -6.6 v1.6 M0 5 v1.6 M-6.6 0 h1.6 M5 0 h1.6 M-4.7 -4.7 l1.2 1.2 M3.5 3.5 l1.2 1.2 M4.7 -4.7 l-1.2 1.2 M-3.5 3.5 l-1.2 1.2" stroke="#fbd36e" stroke-width="1" stroke-linecap="round"/></g>
<g id="i-vp"><rect x="-4.6" y="-4.6" width="8" height="8" fill="#7f8897"/><path d="M-5.6 -3 V-5.6 H-3 M1.8 -5.6 H4.4 V-3 M-5.6 1.8 V4.4 H-3" stroke="#a3aab6" stroke-width="1.1"/><circle cx="3.2" cy="3.4" r="2" fill="#fbd36e"/><path d="M3.2 .2 v.9 M3.2 5.7 v.9 M0 3.4 h.9 M5.5 3.4 h.9 M.9 1.1 l.7 .7 M4.9 5.1 l.7 .7 M5.6 1.1 l-.7 .7 M1.5 5.1 l-.7 .7" stroke="#fbd36e" stroke-width=".8" stroke-linecap="round"/></g>
<g id="i-lock"><rect x="-5" y="-.6" width="9" height="6.6" fill="#fbd36e"/><rect x="-1.1" y="1.4" width="1" height="2.6" fill="#6a5c2c"/><path d="M.6 -.8 V-3 A2.5 2.5 0 0 1 5.6 -3 V-2" stroke="#fbd36e" stroke-width="1.4"/></g>
<g id="i-prn"><rect x="-3.4" y="-5.6" width="6.8" height="4" fill="#f1f2f4"/><rect x="-6" y="-2.4" width="12" height="6" rx="1" fill="#e4e6e9"/><rect x="-3.4" y="1" width="6.8" height="5" fill="#6fb9f2" stroke="#e4e6e9" stroke-width=".8"/></g>
<g id="i-prn0"><rect x="-3.4" y="-5.6" width="6.8" height="4" fill="#7a8290"/><rect x="-6" y="-2.4" width="12" height="6" rx="1" fill="#7a8290"/><rect x="-3.4" y="1" width="6.8" height="5" fill="#5c6472" stroke="#7a8290" stroke-width=".8"/></g>
<g id="i-lay"><path d="M-6 2.6 l4.6 -5.2 h8 l-4.6 5.2z" fill="#78c0f6"/></g>
<g id="i-stk"><path d="M-7 5 l4.4 -5 h9 l-4.4 5z" fill="#d8d9db"/><path d="M-7 1.8 l4.4 -5 h9 l-4.4 5z" fill="#d8d9db" stroke="#3b4453" stroke-width=".6"/><path d="M-7 -1.6 l4.4 -5 h9 l-4.4 5z" fill="#d8d9db" stroke="#3b4453" stroke-width=".6"/></g>
</defs>
<path d="M40.4 252.4 l3.2 3.4 6 -7" stroke="#3ecf6e" stroke-width="1.9"/>
<use href="#i-bulb" x="138.2" y="252.0"/>
<use href="#i-sun" x="156.4" y="252.2"/>
<use href="#i-vp" x="174.8" y="252.2"/>
<use href="#i-lock" x="192.4" y="252.2"/>
<use href="#i-prn" x="212" y="252.0"/>
<use href="#i-lay" x="45" y="270.4"/>
<use href="#i-bulb" x="138.2" y="270.4"/>
<use href="#i-sun" x="156.4" y="270.6"/>
<use href="#i-vp" x="174.8" y="270.6"/>
<use href="#i-lock" x="192.4" y="270.6"/>
<use href="#i-prn" x="212" y="270.4"/>
<use href="#i-lay" x="45" y="288.9"/>
<use href="#i-bulb" x="138.2" y="288.9"/>
<use href="#i-sun" x="156.4" y="289.1"/>
<use href="#i-vp" x="174.8" y="289.1"/>
<use href="#i-lock" x="192.4" y="289.1"/>
<use href="#i-prn" x="212" y="288.9"/>
<use href="#i-lay" x="45" y="307.3"/>
<use href="#i-bulb" x="138.2" y="307.3"/>
<use href="#i-sun" x="156.4" y="307.5"/>
<use href="#i-vp" x="174.8" y="307.5"/>
<use href="#i-lock" x="192.4" y="307.5"/>
<use href="#i-prn" x="212" y="307.3"/>
<use href="#i-lay" x="45" y="325.7"/>
<use href="#i-bulb" x="138.2" y="325.7"/>
<use href="#i-sun" x="156.4" y="325.9"/>
<use href="#i-vp" x="174.8" y="325.9"/>
<use href="#i-lock" x="192.4" y="325.9"/>
<use href="#i-prn0" x="212" y="325.7"/>
<use href="#i-lay" x="45" y="344.2"/>
<use href="#i-bulb" x="138.2" y="344.2"/>
<use href="#i-sun" x="156.4" y="344.4"/>
<use href="#i-vp" x="174.8" y="344.4"/>
<use href="#i-lock" x="192.4" y="344.4"/>
<use href="#i-prn" x="212" y="344.2"/>
<use href="#i-lay" x="45" y="362.6"/>
<use href="#i-bulb" x="138.2" y="362.6"/>
<use href="#i-sun" x="156.4" y="362.8"/>
<use href="#i-vp" x="174.8" y="362.8"/>
<use href="#i-lock" x="192.4" y="362.8"/>
<use href="#i-prn" x="212" y="362.6"/>
<use href="#i-lay" x="45" y="381.0"/>
<use href="#i-bulb" x="138.2" y="381.0"/>
<use href="#i-sun" x="156.4" y="381.2"/>
<use href="#i-vp" x="174.8" y="381.2"/>
<use href="#i-lock" x="192.4" y="381.2"/>
<use href="#i-prn" x="212" y="381.0"/>
<use href="#i-lay" x="45" y="399.4"/>
<use href="#i-bulb" x="138.2" y="399.4"/>
<use href="#i-sun" x="156.4" y="399.6"/>
<use href="#i-vp" x="174.8" y="399.6"/>
<use href="#i-lock" x="192.4" y="399.6"/>
<use href="#i-prn" x="212" y="399.4"/>
<use href="#i-lay" x="45" y="417.9"/>
<use href="#i-bulb" x="138.2" y="417.9"/>
<use href="#i-sun" x="156.4" y="418.1"/>
<use href="#i-vp" x="174.8" y="418.1"/>
<use href="#i-lock" x="192.4" y="418.1"/>
<use href="#i-prn" x="212" y="417.9"/>
<g id="ptb">
<path d="M3.4 201.6 h5 l1.4 1.8 h7 v8.8 h-13.4z" fill="#d8d9db"/>
<path d="M10.4 207.4 h8.6 l-3.4 4 v4 l-1.8 -1 v-3z" fill="#d8d9db" stroke="#3b4453" stroke-width=".7"/>
<path d="M27.2 202.4 h5 l1.4 1.8 h7.4 v8.8 h-13.8z" fill="#d8d9db"/>
<path d="M55.6 209 l4.6 -5 h8.6 l-4.6 5z" fill="#9ba1ab"/><path d="M55.6 205.8 l4.6 -5 h8.6 l-4.6 5z" fill="#d8d9db" stroke="#3b4453" stroke-width=".5"/>
<rect x="62.6" y="205.6" width="8.4" height="10" fill="#eceef0"/><rect x="64.2" y="207.2" width="5.2" height="3" fill="#5fa8e8"/><path d="M64.6 212.8 h4.4" stroke="#6b7280" stroke-width=".8"/>
<use href="#i-stk" x="92" y="207.6"/><path d="M95.6 206 l1.2 3 3 1.2 -3 1.2 -1.2 3 -1.2 -3 -3 -1.2 3 -1.2z" fill="#fbd36e"/>
<use href="#i-stk" x="115.4" y="207.6"/><circle cx="119.6" cy="212.4" r="3" stroke="#3fb6c4" stroke-width=".9"/><path d="M119.6 208.8 v7.2 M116 212.4 h7.2" stroke="#3fb6c4" stroke-width=".8"/>
<use href="#i-stk" x="138.4" y="207.6"/><path d="M141 210.6 l4.6 4.6 M145.6 210.6 l-4.6 4.6" stroke="#ef4a55" stroke-width="1.5"/>
<use href="#i-stk" x="161.6" y="207.6"/><path d="M163.2 212.4 l2 2.2 3.8 -4.4" stroke="#3ecf6e" stroke-width="1.4"/>
<path d="M283.4 204.6 A7 7 0 0 0 270.2 205.6 M270.4 211.2 A7 7 0 0 0 283.6 210.2" stroke="#3ecf6e" stroke-width="2"/>
<path d="M285.2 201.2 v5.4 h-5.4z M268.6 214.6 v-5.4 h5.4z" fill="#3ecf6e"/>
<path d="M296.4 213.4 l3.6 -3.6 h8 l-3.6 3.6z" fill="#2f3744"/>
<rect x="294.2" y="202.2" width="7" height="7" fill="#e1e2e4"/>
<g transform="translate(323.2 208.2)"><circle r="4.6" stroke="#f1f2f4" stroke-width="2.6"/><path d="M0 -8.2 v3 M0 5.2 v3 M-8.2 0 h3 M5.2 0 h3 M-5.8 -5.8 l2.1 2.1 M3.7 3.7 l2.1 2.1 M5.8 -5.8 l-2.1 2.1 M-3.7 3.7 l-2.1 2.1" stroke="#f1f2f4" stroke-width="2.6"/></g>
<circle cx="332.6" cy="180" r="3.8" stroke="#d8d9db" stroke-width="1.1" fill="#6b7487"/><path d="M335.6 183 l3.6 3" stroke="#d9a64e" stroke-width="1.4"/>
<path d="M1.6 937.4 h4.6 l1.2 1.6 h6.6 v8.4 h-12.4z" fill="#d8d9db"/><path d="M12.6 940.6 l-3.4 4.4 h2.4 l-1.6 4 4.6 -5.4 h-2.4 l2 -3z" fill="#fbd36e" stroke="#3b4453" stroke-width=".4"/>
<path d="M7 151.5 v8 M9 151.5 v8" stroke="#7d8593" stroke-width="1" stroke-dasharray="1 1"/>
</g>
</svg>
</div>
</div>

<div id="draw">
<svg width="1428" height="987" viewBox="0 0 1428 987" style="left:-347px;top:-142px" fill="none" font-family="Liberation Sans, sans-serif">
<path d="M922.6 143L922.6 502.4M1289.7 143L1289.7 502.7M810 159L1352.6 159M816.1 159L816.1 501.3M820.5 251L821.5 257L830 258.5M831.8 159L831.8 501.3M825.8 198.7L932 198.7M825.8 247.6L932 247.6M825.8 270L932 270M825.8 303.6L932 303.6M825.8 340.1L932 340.1M825.8 370.6L932 370.6M825.8 426.2L932 426.2M825.8 471.7L932 471.7M798.7 502.4L922.8 502.4M1346.9 158.8L1346.9 510.8M1281.4 199.7L1352.6 199.7M1281.4 237.4L1352.6 237.4M1281.4 281.2L1352.6 281.2M1281.4 318.7L1352.6 318.7M1281.4 364.9L1352.6 364.9M1281.4 402.1L1352.6 402.1M1281.4 438.4L1352.6 438.4M1281.4 488.5L1352.6 488.5M881.2 186L881.2 502.4M1331.4 187L1331.4 502.7M1289.7 502.7L1336.6 502.7M911.2 216a2.6 2.6 0 1 0 5.2 0a2.6 2.6 0 1 0 -5.2 0M911.9 279.5a2.6 2.6 0 1 0 5.2 0a2.6 2.6 0 1 0 -5.2 0M912.1 349a2.6 2.6 0 1 0 5.2 0a2.6 2.6 0 1 0 -5.2 0M912 441a2.6 2.6 0 1 0 5.2 0a2.6 2.6 0 1 0 -5.2 0M896.5 491.5L896.5 499.5M1291 217.5a2.6 2.6 0 1 0 5.2 0a2.6 2.6 0 1 0 -5.2 0M1290.6 288a2.6 2.6 0 1 0 5.2 0a2.6 2.6 0 1 0 -5.2 0M1291.4 472a2.6 2.6 0 1 0 5.2 0a2.6 2.6 0 1 0 -5.2 0M937.6 151.4a2.6 2.6 0 1 0 5.2 0a2.6 2.6 0 1 0 -5.2 0M974.8 166.9L1282.6 166.9M934 169.8L1279.1 169.8M930.6 169L930.6 512.5M934 169.8L934 512.5M1279.1 169.8L1279.1 428M1282.6 166.9L1282.6 428M935.6 160L974.3 160L974.3 167L935.6 167ZM935.6 162.4L974.3 162.4M935.6 164.6L974.3 164.6M981.6 171L981.6 181.6M930.6 160L930.6 169M1155.1 159L1155.1 169M1168.9 159L1168.9 169M1025.7 147.8L1025.7 547.2M1090.6 169.8L1090.6 294.6M1093.6 169.8L1093.6 294.6M1093.6 294.6L1081.9 294.6L1081.9 310.3M1084.6 297L1084.6 310.3M1084.6 297L1093.6 297M934 258.1L1090.6 258.1M934 304.6L1279 304.6M934 195L940 195M934 303.6L940 303.6M934 198.7L931.8 201L931.8 222L933.2 224L933.2 245L934 247.6M934 340.1L931.8 342L931.8 356L933 358L933 370.6M934 426.2L931.8 428L931.8 450L933.2 452L933.2 471.7M934 335L962.5 335M934 337.6L962.5 337.6M962.5 335L962.5 341M987.1 335L1083.5 335M987.1 337.6L1083.5 337.6M987.1 335L987.1 337.6M1012.5 322L1014 332L1022 335M1108.2 189.6L1108.1 191L1107.7 192.3L1107.1 193.4L1106.4 194.3L1105.5 194.8L1104.6 195L1103.7 194.8L1102.8 194.3L1102.1 193.4L1101.5 192.3L1101.1 191L1101 189.6L1101.1 188.2L1101.5 186.9L1102.1 185.8L1102.8 184.9L1103.7 184.4L1104.6 184.2L1105.5 184.4L1106.4 184.9L1107.1 185.8L1107.7 186.9L1108.1 188.2ZM1135.9 185a0.8 0.8 0 1 0 1.6 0a0.8 0.8 0 1 0 -1.6 0M1174 169.9L1174 219.2M1176.3 169.9L1176.3 219.2M1093.6 219.7L1279 219.7M1176.5 215L1178 209.5L1184 208M1120.7 223.1L1129.9 223.1M1129.9 223.1L1129.9 234.2M1120.7 223.1L1120.7 226M1129.9 234.2L1135.6 234.2M1126 226L1126 232M1135.6 225L1174.6 225L1174.6 259.4L1135.6 259.4ZM1129.9 259.4L1159.7 259.4M1129.9 261.6L1159.7 261.6M1129.9 259.4L1129.9 287M1131 261.6L1147 261.6L1147 287L1131 287ZM1158.7 286a1 1 0 1 0 2 0a1 1 0 1 0 -2 0M1147 271.6L1279 271.6M1147 274.4L1279 274.4M1173 274.4L1173 316.8M1175.8 274.4L1175.8 316.8M1129.9 316.4L1175.8 316.4M1132 318.4L1175.8 318.4M1129.9 287L1129.9 316M1132.2 287L1132.2 316M1114.2 289.3L1114.2 399.4M1160.2 226.1L1160.2 344.4M1176.6 300L1178 294.6L1184 293M1227 264L1228 270L1237 273M1227 339L1228 346L1237 349M1129.9 347.9L1279 347.9M1129.9 350.2L1279 350.2M1129.9 350.2L1166.6 350.2L1166.6 373L1129.9 373ZM1135 352.4L1164.4 352.4L1164.4 370.6L1135 370.6ZM1238.5 169.9L1238.5 574M1135.6 254.1L1279 254.1M1268.8 195.1L1278 195.1M1268.8 242L1278 242M1268.8 276.6L1278 276.6M1268.8 323.3L1278 323.3M1268.8 360.3L1278 360.3M1268.8 406.7L1278 406.7M1268.8 416.6L1278 416.6L1278 426.5L1268.8 426.5ZM1341.2 267.5L1428 267.5M1340.4 267.5L1351.5 257.5L1351.5 278ZM635 379.6L755.4 379.6L801 425.6M787.6 425.6L802.6 425.6L802.6 410.6ZM934 381.8L1062 381.8M1007.9 392.5a1.6 1.6 0 1 0 3.2 0a1.6 1.6 0 1 0 -3.2 0M1018 392a1 1 0 1 0 2 0a1 1 0 1 0 -2 0M1035.3 382.5L1049.9 382.5L1049.9 401.1L1035.3 401.1ZM1032.4 381.8L1032.4 402M934 402L1089 402M934 406.5L1081.9 406.5M1062.2 364.6L1081.9 364.6L1081.9 401.1L1062.2 401.1ZM1064.6 366.8L1064.6 401M1064.6 366.8L1079.6 366.8M1079.6 366.8L1079.6 401M1081.9 406.5L1081.9 548.3M1088 402L1088 548.3M934 465.8L1279 465.8M1088 463L1090.6 454.4L1097 453.6M1128 463L1130.8 454.4L1137 453.6M1040.9 497.5L1081.9 497.5L1081.9 518.1L1040.9 518.1ZM1043 499.6L1043 518M1043 499.6L1081.9 499.6M1070.6 486L1070.6 546M1058.6 485.6L1060 494L1068 497M988.2 548.3L1088 548.3M988.2 550.6L1019.6 550.6M988.2 545L988.2 550.6M960.4 548.3L960.4 524L963.6 523M1091.6 405.6L1097 405.6L1097 409L1108.6 409L1108.6 405.6L1113.8 405.6L1102.8 398.4ZM1082 532L1087 522L1087 527L1092.4 527L1092.4 538.6L1087 538.6L1087 543.4ZM1114.2 372L1114.2 399.4M1120.6 371L1120.6 399M1130.5 426.9L1282 426.9M1130.5 432.2L1279 432.2M1125.3 405L1125.3 556.7M1130.5 405L1130.5 426.9M1130.5 432.2L1130.5 549.8M1125.3 405L1131 405M1131 404L1152.4 404L1152.4 426.5L1131 426.5ZM1134 406.4L1148.4 406.4L1148.4 415L1134 415ZM1134 417L1148.4 417L1148.4 425L1134 425ZM1129.9 373L1136 373M1227 418L1228 426L1237 429M1278.7 432.2L1278.7 513.5M1282 432.2L1282 440M1279 440L1282.6 440M1282 440L1280.4 442L1280.4 486L1282 488.5M1268 492.4L1279 492.4M1130.5 549.8L1157.4 549.8L1157.4 574M1127.6 556.7L1151.7 556.7L1151.7 578L1127.6 578ZM1130.6 559.6L1148.6 559.6L1148.6 576L1130.6 576ZM1278.7 510.8L1336.6 510.8M1285.6 513.5L1392.8 513.5M1283 513.5L1283 546M1285.6 513.5L1285.6 546M1315.4 515.4L1315.4 574M1303 562L1304.6 571L1313 574M1354.6 522.6a1.4 1.4 0 1 0 2.8 0a1.4 1.4 0 1 0 -2.8 0M1336.6 502.7L1336.6 513.5M1372.2 503.9L1372.2 513.5M1392.8 513.5L1392.8 544M1394.7 513.5L1394.7 541M1336.6 503.9L1410 503.9M1410 503.9L1428 521.6M1372.2 510.8L1407.8 510.8M1407.8 510.8L1428 530.6M1294 474L1410.5 474M1410.5 468.3L1410.5 501.6M803 510.2L868.3 510.2M806 513.6L868.3 513.6M868.3 510.2L868.3 588M874.2 513.6L874.2 584.6M874.2 512.5L930.6 512.5M876 514L876 521M916 514L916 521M930.6 512.5L934 512.5M857 561.8L1016 561.8M874.2 584.6L956.2 584.6M868.3 588.7L956.2 588.7M848.2 576.8L868.3 576.8L868.3 589.1L848.2 589.1ZM850.4 579L866.2 579L866.2 587L850.4 587ZM881.5 599.6a0.9 0.9 0 1 0 1.8 0a0.9 0.9 0 1 0 -1.8 0M905.3 588.7L905.3 627.2M908.7 588.7L908.7 627.2M956.2 550.6L956.2 665.3M961.8 550.6L961.8 584M961.8 588L961.8 665.3M930 590.3L956.2 590.3L956.2 614.9L930 614.9ZM931.6 590.3L931.6 614.9M880.7 623.9L956.2 623.9M961.8 623.9L1008.4 623.9M880.7 618L880.7 623.9M908.7 628L910 633.6L917 634.6M937.8 649a1 1 0 1 0 2 0a1 1 0 1 0 -2 0M969.6 653a1 1 0 1 0 2 0a1 1 0 1 0 -2 0M1016.9 550.6L1016.9 611.5M1020.7 550.6L1020.7 611.5M1020.7 611.5L1009.5 611.5L1009.5 665.3M1016.2 614.9L1016.2 665.3M988 585.6L1016.9 585.6M988 587L1016.9 587M988 583L988 587M1016.2 614.9L1081.9 614.9L1081.9 665.3L1016.2 665.3ZM1027 616L1027 665M1019.6 550.1L1086.8 550.1L1086.8 612.7L1019.6 612.7ZM1024.6 552.4L1077.9 552.4L1077.9 609.4L1024.6 609.4ZM1041 583.6L1043.6 583.6L1043.6 590.6L1041 590.6ZM1042.4 602.6L1042.4 609.4M1058 602.6L1058 609.4M1077.9 573.6L1081.9 573.6M1077.9 599.4L1081.9 599.4M906.4 665.3L1081.9 665.3M916.5 670.3L1081.9 670.3M1081.9 665.3L1081.9 670.3M916.5 670.3L903.1 683.7M906.4 665.3L896.4 676.5M896.4 676.5L903.1 683.7M933.3 707.5L1027.5 707.5M936 713.5L1015.1 713.5M1027.5 707.5L1027.5 713.5M1058.8 707.5L1278 707.5M1058.8 713.5L1264.2 713.5M1058.8 707.5L1058.8 713.5M1027 670.3L1027 707.5M1031 709L1040 709L1040 706.6L1046.4 706.6L1046.4 709L1054 709L1043 716ZM890.6 713.4L889.6 703L892.6 706L902.6 697.6L903.6 701.6L896 709.6L898 712ZM961.3 714.6L1011.8 714.6L1011.8 734.8L961.3 734.8ZM947 720a1 1 0 1 0 2 0a1 1 0 1 0 -2 0M948 714L948 718M1015.1 713.5L1015.1 767.3M1076.8 713.5L1112.6 713.5L1112.6 731.4L1076.8 731.4ZM1079 713.5L1079 731.4M1076.8 731.4L1076.8 767.3M1079 731.4L1079 767.3M1127.6 560L1157 560L1157 637L1127.6 637ZM1154 560L1154 637M1130.6 561L1147.4 561L1147.4 574.4L1130.6 574.4ZM1130.6 576L1147.4 576L1147.4 589.4L1130.6 589.4ZM1130.6 596L1147.4 596L1147.4 609.4L1130.6 609.4ZM1130.6 612L1147.4 612L1147.4 625.4L1130.6 625.4ZM1127.6 634L1157 634M1157 574.9L1253.4 574.9M1157 577.6L1253.4 577.6M1253.4 574.9L1253.4 671.4M1258.5 574.9L1258.5 671.4M1253.4 574.9L1265 574.9M1127.6 665.7L1258.5 665.7M1127.6 671.4L1258.5 671.4M1127.6 662L1127.6 671.4M1157 583L1245.2 583L1245.2 665.7L1157 665.7ZM1194.2 618.6L1208.4 618.6L1208.4 626.6L1194.2 626.6ZM1162 583L1162 960M1150.6 658L1152 663L1160 666M1150.6 701L1152 706L1160 709M1260 574.9L1260 671M1261 669.6L1266.4 669.6L1266.4 672.6L1277 672.6L1277 669.6L1282.6 669.6L1271.6 664.4ZM1258.5 631.9L1292.9 631.9M1292.9 614L1292.9 638M1292.9 614L1323.9 614M1315.4 574L1315.4 614M1310 574.9L1340 574.9M1340 574.9L1352 587.4M1292.9 646.4L1314 646.4L1296 664.6L1292.9 664.6ZM1286 665.7L1292.9 665.7M1286 665.7L1286 671.4M1286 671.4L1294 671.4M968.1 769L1113.8 769M968.1 770.6L1113.8 770.6M968.1 769L943.4 793.6M968.1 770.6L946.1 792.6M940.7 795L940.7 878.8M946.1 792.6L946.1 878.8M1044.3 770.6L1044.3 878.8M1047.2 770.6L1047.2 878.8M934.5 845.2L1281.4 845.2M1045 842L1048 832L1056 830.6M1113 842L1115.6 834.6L1122 833.6M1111.5 770.6L1111.5 878.8M1114.2 770.6L1114.2 878.8M1092.4 770.6L1111.5 770.6L1111.5 839.6L1092.4 839.6ZM1101.6 810a1.2 1.2 0 1 0 2.4 0a1.2 1.2 0 1 0 -2.4 0M1101.6 820a1.2 1.2 0 1 0 2.4 0a1.2 1.2 0 1 0 -2.4 0M930.4 815a1.2 1.2 0 1 0 2.4 0a1.2 1.2 0 1 0 -2.4 0M930.4 826a1.2 1.2 0 1 0 2.4 0a1.2 1.2 0 1 0 -2.4 0M925.5 878.8L977 878.8M1024.1 878.8L1060.6 878.8M1091.3 878.8L1118.4 878.8M1150 878.8L1186.8 878.8M1233.2 878.8L1270 878.8M925.5 889.5L1279 889.5M925.5 883.6L945.7 883.6M977 871L977 889.5M1024.1 871L1024.1 889.5M977 887L1024.1 887M971.4 867.6L971.4 878.8M1026.3 867.6L1026.3 878.8M1060.6 878.8L1060.6 889.5M1091.3 878.8L1091.3 889.5M1074 869.6L1076 874M1078 869.6L1076 874M1060.6 881.4L1091.3 881.4M1055.5 867.6L1055.5 878.8M1093.6 867.6L1093.6 878.8M1118.4 878.8L1118.4 889.5M1150 878.8L1150 889.5M1132 869L1134 874M1136 869L1134 874M1118.4 881.4L1150 881.4M1151.7 867.3L1151.7 878.8M1186.8 871L1186.8 889.5M1233.2 871L1233.2 889.5M1186.8 887L1233.2 887M1180.8 867.3L1180.8 878.8M1236.7 867.3L1236.7 878.8M930.6 889.5L930.6 934.5M977 889.5L977 934.5M1024.1 889.5L1024.1 934.5M1060.6 889.5L1060.6 934.5M1091.3 889.5L1091.3 934.5M1118.4 889.5L1118.4 934.5M1150 889.5L1150 934.5M1186.8 889.5L1186.8 934.5M1233.2 889.5L1233.2 934.5M1278.7 889.5L1278.7 934.5M948.4 889.5L948.4 932M1032.4 889.5L1032.4 932M1173.8 889.5L1173.8 932M1257.8 889.5L1257.8 932M1003.6 896a2.6 2.6 0 1 0 5.2 0a2.6 2.6 0 1 0 -5.2 0M1079.1 896a2.6 2.6 0 1 0 5.2 0a2.6 2.6 0 1 0 -5.2 0M1214.5 896.2a2.6 2.6 0 1 0 5.2 0a2.6 2.6 0 1 0 -5.2 0M1264.2 713.5L1264.2 878.3M1270 797.9L1270 878.3M1264.2 793L1270 797.9M1277.8 823a1.2 1.2 0 1 0 2.4 0a1.2 1.2 0 1 0 -2.4 0M1270 843L1273 832L1280 830M1270 878.3L1284 878.3M1279.1 889.8L1325 931M1284 878.3L1289 883M744.8 448.8L431.7 761.8M742.2 446.2L800 504M709.9 478.6L767.6 536.4M683.9 504.6L741.6 562.4M639.6 548.9L697.4 606.6M613 575.5L670.7 633.3M570.1 618.4L627.9 676.1M544.3 644.2L602 702M518.3 670.2L576 728M490.9 697.6L548.6 755.4M429.2 759.3L495.9 826M742.2 446.2L798 502M745.3 496.3L510.3 731.3M744.5 496.5L774.5 526.5M777.5 526.5L540 764M802 514L496.5 819.5M803 519L502.5 819.5M798.7 501.7L775.5 525.5M497.5 818.5L652 973M503.5 818.5L655 970M557.6 891L539 909.4L589.6 960M440.4 863.6L531.4 954.6M488 818L439 867M502.5 823.5L449 877M529.5 850.5L476 904M445 866L439 882L444 887M517 944L531 944L531 930ZM524 937L538 951M768.8 630.8L542.2 857.2M769.5 552.5L862.5 645.5M733.5 588.5L872.5 727.5M735.5 586.5L870.5 721.5M717 605L779.5 667.5M669 653L707.8 691.8M572.5 749.5L637.5 814.5M574.5 747.5L639.5 812.5M591 731L656 796M521.5 800.5L624.5 903.5M779.9 667.1L747.4 699.6M781.6 668.9L755.3 695.3M621.5 902.5L685.5 838.5M623.5 904.5L687.5 840.5M620.5 931.5L696 856M779.5 667.5L844.5 732.5M779.5 671.1L842.7 734.3M652.5 669.5L683 700L696.2 686.8L729.2 718.8L709.1 738.9M654.2 667.8L683 696.5L696.2 683.2L729.2 715.2M689.7 719.3L672.2 736.8L692.2 756.8M692.2 756.8L638 811M694 758.5L639.8 812.8M777.5 744.5L808.2 713.8L841.2 746.8L810.5 777.5ZM781.5 744.5L808.2 717.8L837.2 746.8L810.5 773.5ZM770 718L779 709L795 725L786 734ZM804 738a1 1 0 1 0 2 0a1 1 0 1 0 -2 0M842.8 663.2L828.5 677.5M844.8 665.2L830.5 679.5M859.8 679.2L844 695M861.8 681.2L846 697M862.5 645.5L908.5 691.5M801 781L839.5 819.5M823.7 830.3L860.7 793.3M825.7 832.3L862.7 795.3M820 825L897.5 902.5M824 825L899.5 900.5M922 788L780 930M649.8 802.2L718.8 871.2M672.5 821.5L719.5 868.5M696.2 797.2L716.2 777.2M698 799L718 779M695.5 756.5L718 779M697.3 754.7L717.8 775.2M719 865L789.5 794.5M719 869L793.5 794.5M699.5 847.5L761.5 785.5M736.5 760.5L780 804M738.5 758.5L782 802M924.5 882.5L872.5 934.5M920 880L865.5 934.5M930.5 890.5L887.5 933.5M913.8 906.6a2.6 2.6 0 1 0 5.2 0a2.6 2.6 0 1 0 -5.2 0M933.3 707.5L893 747.5M936 713.5L897 752.5M893 747.5L868 722.5M898.2 748.8L943.2 793.8M898.2 752.8L941.2 795.8M901 749L914 736L940 762L927 775ZM904 749L914 739L921 746L911 756ZM912 757L922 747L929 754L919 764ZM920 765L930 755L937 762L927 772ZM935.6 780a1.4 1.4 0 1 0 2.8 0a1.4 1.4 0 1 0 -2.8 0M1314.8 575.8L1339.3 575.8L1350.5 586.9M1316 577.8L1338.6 577.8M1350.5 586.9L1415.1 522.3M1355.5 587.5L1415.5 527.5M1393.9 513.5L1393.9 544.6M1323.7 615.9L1328.2 611.4M1323.3 616.3L1384.5 677.5M1327 616L1386.5 675.5M1357.2 624.9L1397.2 664.9M1346 636L1357.1 624.8M1383.5 678.5L1431 631M1363.5 706.5L1435 635M1293.2 663.8L1394.8 765.2M1293.2 669.8L1391.8 768.2M1285.8 665.7L1289 665.7L1294.7 671.4M1277.6 707.6L1319 749M1275.2 713.2L1296 734M1296 734L1248 782L1263 797L1311 749ZM1315.5 753.5L1269.5 799.5M1295 739L1286 748L1297 759L1306 750ZM1284 750L1275 759L1286 770L1295 761ZM1273 761L1264 770L1275 781L1284 772ZM1262 772L1253 781L1264 792L1273 783ZM1264.2 760.5L1273.4 760.5M1273.4 760.5L1300 734M1290.8 780.2L1427.8 917.2M1306.8 904.2L1398 813M1304.3 901.7L1395.5 810.5M1352 848L1358 843L1364 845M1347 791L1382.5 826.5M1347 795L1379 827M1357.5 797.5L1387.5 767.5M1359.5 799.5L1389.5 769.5M1414 714L1444 684M1416 716L1446 686M1395 695L1416 716M1397 693L1416 712M1279.5 889.5L1326 936M1283 886L1329.5 932.5M1285.4 898a2.6 2.6 0 1 0 5.2 0a2.6 2.6 0 1 0 -5.2 0" stroke="#0d0d0d" stroke-width="1"/>
<path d="M816.1 159l-1.1 -3.4h2.2zM816.1 159l-1.1 3.4h2.2zM816.1 501.3l-1.1 -3.4h2.2zM816.1 501.3l-1.1 3.4h2.2zM831.8 159l-1.1 -3.4h2.2zM831.8 159l-1.1 3.4h2.2zM831.8 198.7l-1.1 -3.4h2.2zM831.8 198.7l-1.1 3.4h2.2zM831.8 247.6l-1.1 -3.4h2.2zM831.8 247.6l-1.1 3.4h2.2zM831.8 270l-1.1 -3.4h2.2zM831.8 270l-1.1 3.4h2.2zM831.8 303.6l-1.1 -3.4h2.2zM831.8 303.6l-1.1 3.4h2.2zM831.8 340.1l-1.1 -3.4h2.2zM831.8 340.1l-1.1 3.4h2.2zM831.8 370.6l-1.1 -3.4h2.2zM831.8 370.6l-1.1 3.4h2.2zM831.8 426.2l-1.1 -3.4h2.2zM831.8 426.2l-1.1 3.4h2.2zM831.8 471.7l-1.1 -3.4h2.2zM831.8 471.7l-1.1 3.4h2.2zM831.8 501.3l-1.1 -3.4h2.2zM831.8 501.3l-1.1 3.4h2.2zM1346.9 158.8l-1.1 -3.4h2.2zM1346.9 158.8l-1.1 3.4h2.2zM1346.9 199.7l-1.1 -3.4h2.2zM1346.9 199.7l-1.1 3.4h2.2zM1346.9 237.4l-1.1 -3.4h2.2zM1346.9 237.4l-1.1 3.4h2.2zM1346.9 281.2l-1.1 -3.4h2.2zM1346.9 281.2l-1.1 3.4h2.2zM1346.9 318.7l-1.1 -3.4h2.2zM1346.9 318.7l-1.1 3.4h2.2zM1346.9 364.9l-1.1 -3.4h2.2zM1346.9 364.9l-1.1 3.4h2.2zM1346.9 402.1l-1.1 -3.4h2.2zM1346.9 402.1l-1.1 3.4h2.2zM1346.9 438.4l-1.1 -3.4h2.2zM1346.9 438.4l-1.1 3.4h2.2zM1346.9 488.5l-1.1 -3.4h2.2zM1346.9 488.5l-1.1 3.4h2.2zM1346.9 510.8l-1.1 -3.4h2.2zM1346.9 510.8l-1.1 3.4h2.2zM1025.7 159l-1.1 -3.4h2.2zM1025.7 159l-1.1 3.4h2.2zM1025.7 168.4l-1.1 -3.4h2.2zM1025.7 168.4l-1.1 3.4h2.2zM1025.7 335.8l-1.1 -3.4h2.2zM1025.7 335.8l-1.1 3.4h2.2zM1025.7 403l-1.1 -3.4h2.2zM1025.7 403l-1.1 3.4h2.2zM1025.7 406.5l-1.1 -3.4h2.2zM1025.7 406.5l-1.1 3.4h2.2zM1025.7 547.2l-1.1 -3.4h2.2zM1025.7 547.2l-1.1 3.4h2.2zM934 258.1l-3.4 -1.1v2.2zM934 258.1l3.4 -1.1v2.2zM1090.6 258.1l-3.4 -1.1v2.2zM1090.6 258.1l3.4 -1.1v2.2zM934 304.6l-3.4 -1.1v2.2zM934 304.6l3.4 -1.1v2.2zM1081.9 304.6l-3.4 -1.1v2.2zM1081.9 304.6l3.4 -1.1v2.2zM1084.6 304.6l-3.4 -1.1v2.2zM1084.6 304.6l3.4 -1.1v2.2zM1112.6 304.6l-3.4 -1.1v2.2zM1112.6 304.6l3.4 -1.1v2.2zM1130 304.6l-3.4 -1.1v2.2zM1130 304.6l3.4 -1.1v2.2zM1160 304.6l-3.4 -1.1v2.2zM1160 304.6l3.4 -1.1v2.2zM1176 304.6l-3.4 -1.1v2.2zM1176 304.6l3.4 -1.1v2.2zM1279 304.6l-3.4 -1.1v2.2zM1279 304.6l3.4 -1.1v2.2zM1093.6 219.7l-3.4 -1.1v2.2zM1093.6 219.7l3.4 -1.1v2.2zM1108 219.7l-3.4 -1.1v2.2zM1108 219.7l3.4 -1.1v2.2zM1174 219.7l-3.4 -1.1v2.2zM1174 219.7l3.4 -1.1v2.2zM1180 219.7l-3.4 -1.1v2.2zM1180 219.7l3.4 -1.1v2.2zM1279 219.7l-3.4 -1.1v2.2zM1279 219.7l3.4 -1.1v2.2zM1114.2 289.3l-1.1 -3.4h2.2zM1114.2 289.3l-1.1 3.4h2.2zM1114.2 304.6l-1.1 -3.4h2.2zM1114.2 304.6l-1.1 3.4h2.2zM1114.2 399.4l-1.1 -3.4h2.2zM1114.2 399.4l-1.1 3.4h2.2zM1160.2 226.1l-1.1 -3.4h2.2zM1160.2 226.1l-1.1 3.4h2.2zM1160.2 256.6l-1.1 -3.4h2.2zM1160.2 256.6l-1.1 3.4h2.2zM1160.2 268.5l-1.1 -3.4h2.2zM1160.2 268.5l-1.1 3.4h2.2zM1160.2 290l-1.1 -3.4h2.2zM1160.2 290l-1.1 3.4h2.2zM1160.2 304.6l-1.1 -3.4h2.2zM1160.2 304.6l-1.1 3.4h2.2zM1160.2 318.4l-1.1 -3.4h2.2zM1160.2 318.4l-1.1 3.4h2.2zM1160.2 344.4l-1.1 -3.4h2.2zM1160.2 344.4l-1.1 3.4h2.2zM1238.5 169.9l-1.1 -3.4h2.2zM1238.5 169.9l-1.1 3.4h2.2zM1238.5 271.6l-1.1 -3.4h2.2zM1238.5 271.6l-1.1 3.4h2.2zM1238.5 274.4l-1.1 -3.4h2.2zM1238.5 274.4l-1.1 3.4h2.2zM1238.5 347.9l-1.1 -3.4h2.2zM1238.5 347.9l-1.1 3.4h2.2zM1238.5 350.2l-1.1 -3.4h2.2zM1238.5 350.2l-1.1 3.4h2.2zM1238.5 426.9l-1.1 -3.4h2.2zM1238.5 426.9l-1.1 3.4h2.2zM1238.5 432.2l-1.1 -3.4h2.2zM1238.5 432.2l-1.1 3.4h2.2zM1238.5 574l-1.1 -3.4h2.2zM1238.5 574l-1.1 3.4h2.2zM1135.6 254.1l-3.4 -1.1v2.2zM1135.6 254.1l3.4 -1.1v2.2zM1279 254.1l-3.4 -1.1v2.2zM1279 254.1l3.4 -1.1v2.2zM934 465.8l-3.4 -1.1v2.2zM934 465.8l3.4 -1.1v2.2zM1081.9 465.8l-3.4 -1.1v2.2zM1081.9 465.8l3.4 -1.1v2.2zM1088 465.8l-3.4 -1.1v2.2zM1088 465.8l3.4 -1.1v2.2zM1125.3 465.8l-3.4 -1.1v2.2zM1125.3 465.8l3.4 -1.1v2.2zM1130.5 465.8l-3.4 -1.1v2.2zM1130.5 465.8l3.4 -1.1v2.2zM1279 465.8l-3.4 -1.1v2.2zM1279 465.8l3.4 -1.1v2.2zM1070.6 497.5l-1.1 -3.4h2.2zM1070.6 497.5l-1.1 3.4h2.2zM1070.6 518.1l-1.1 -3.4h2.2zM1070.6 518.1l-1.1 3.4h2.2zM1070.6 546l-1.1 -3.4h2.2zM1070.6 546l-1.1 3.4h2.2zM1054.3 545.6h27.6v3.4h-27.6zM1135.6 398h26.6v3h-26.6zM1315.4 515.4l-1.1 -3.4h2.2zM1315.4 515.4l-1.1 3.4h2.2zM1315.4 574l-1.1 -3.4h2.2zM1315.4 574l-1.1 3.4h2.2zM1294 474l-3.4 -1.1v2.2zM1294 474l3.4 -1.1v2.2zM1410.5 474l-3.4 -1.1v2.2zM1410.5 474l3.4 -1.1v2.2zM868.3 561.8l-3.4 -1.1v2.2zM868.3 561.8l3.4 -1.1v2.2zM874.2 561.8l-3.4 -1.1v2.2zM874.2 561.8l3.4 -1.1v2.2zM956.2 561.8l-3.4 -1.1v2.2zM956.2 561.8l3.4 -1.1v2.2zM961.8 561.8l-3.4 -1.1v2.2zM961.8 561.8l3.4 -1.1v2.2zM988 561.8l-3.4 -1.1v2.2zM988 561.8l3.4 -1.1v2.2zM1003 561.8l-3.4 -1.1v2.2zM1003 561.8l3.4 -1.1v2.2zM1016 561.8l-3.4 -1.1v2.2zM1016 561.8l3.4 -1.1v2.2zM880.7 623.9l-3.4 -1.1v2.2zM880.7 623.9l3.4 -1.1v2.2zM905.3 623.9l-3.4 -1.1v2.2zM905.3 623.9l3.4 -1.1v2.2zM908.7 623.9l-3.4 -1.1v2.2zM908.7 623.9l3.4 -1.1v2.2zM956.2 623.9l-3.4 -1.1v2.2zM956.2 623.9l3.4 -1.1v2.2zM961.8 623.9l-3.4 -1.1v2.2zM961.8 623.9l3.4 -1.1v2.2zM1008.4 623.9l-3.4 -1.1v2.2zM1008.4 623.9l3.4 -1.1v2.2zM878.4 628.3h26.9v3.4h-26.9zM1072.3 626.1h3.8v28h-3.8zM1027 622.7l-1.1 -3.4h2.2zM1027 622.7l-1.1 3.4h2.2zM1027 657.5l-1.1 -3.4h2.2zM1027 657.5l-1.1 3.4h2.2zM1027 670.3l-1.1 -3.4h2.2zM1027 670.3l-1.1 3.4h2.2zM1027 707.5l-1.1 -3.4h2.2zM1027 707.5l-1.1 3.4h2.2zM1127.6 662.6h28.6v3h-28.6zM1186.8 598.8h2.4v2.4h-2.4zM1195.8 598.8h2.4v2.4h-2.4zM1205.8 598.8h2.4v2.4h-2.4zM1215.8 598.8h2.4v2.4h-2.4zM1226.8 604.8h2.4v2.4h-2.4zM1226.8 612.8h2.4v2.4h-2.4zM1227.8 621.8h2.4v2.4h-2.4zM1227.8 632.8h2.4v2.4h-2.4zM1187.8 644.8h2.4v2.4h-2.4zM1194.8 644.8h2.4v2.4h-2.4zM1202.8 644.8h2.4v2.4h-2.4zM1211.8 644.8h2.4v2.4h-2.4zM1221.8 644.8h2.4v2.4h-2.4zM1162 583l-1.1 -3.4h2.2zM1162 583l-1.1 3.4h2.2zM1162 665.7l-1.1 -3.4h2.2zM1162 665.7l-1.1 3.4h2.2zM1162 671.4l-1.1 -3.4h2.2zM1162 671.4l-1.1 3.4h2.2zM1162 707.5l-1.1 -3.4h2.2zM1162 707.5l-1.1 3.4h2.2zM1162 713.5l-1.1 -3.4h2.2zM1162 713.5l-1.1 3.4h2.2zM1162 874.8l-1.1 -3.4h2.2zM1162 874.8l-1.1 3.4h2.2zM1260 574.9l-1.1 -3.4h2.2zM1260 574.9l-1.1 3.4h2.2zM1260 631.9l-1.1 -3.4h2.2zM1260 631.9l-1.1 3.4h2.2zM1260 671l-1.1 -3.4h2.2zM1260 671l-1.1 3.4h2.2zM1258.5 631.9l-3.4 -1.1v2.2zM1258.5 631.9l3.4 -1.1v2.2zM1292.9 631.9l-3.4 -1.1v2.2zM1292.9 631.9l3.4 -1.1v2.2zM1294.6 615.6h28.6v3h-28.6zM1315.4 574l-1.1 -3.4h2.2zM1315.4 574l-1.1 3.4h2.2zM1315.4 614l-1.1 -3.4h2.2zM1315.4 614l-1.1 3.4h2.2zM1041.6 770h2.6v27h-2.6zM1046 770h2.6v27h-2.6zM940.7 845.2l-3.4 -1.1v2.2zM940.7 845.2l3.4 -1.1v2.2zM946.1 845.2l-3.4 -1.1v2.2zM946.1 845.2l3.4 -1.1v2.2zM1044.3 845.2l-3.4 -1.1v2.2zM1044.3 845.2l3.4 -1.1v2.2zM1047.2 845.2l-3.4 -1.1v2.2zM1047.2 845.2l3.4 -1.1v2.2zM1111.5 845.2l-3.4 -1.1v2.2zM1111.5 845.2l3.4 -1.1v2.2zM1114.2 845.2l-3.4 -1.1v2.2zM1114.2 845.2l3.4 -1.1v2.2zM1264.2 845.2l-3.4 -1.1v2.2zM1264.2 845.2l3.4 -1.1v2.2zM1270 845.2l-3.4 -1.1v2.2zM1270 845.2l3.4 -1.1v2.2zM744.8 448.8L743.1 451.9L741.6 450.4ZM744.8 448.8L747.9 447.1L746.4 445.6ZM712.4 481.1L710.8 484.3L709.2 482.7ZM712.4 481.1L715.6 479.5L714 477.9ZM686.4 507.1L684.8 510.3L683.2 508.7ZM686.4 507.1L689.6 505.5L688 503.9ZM642.1 551.4L640.5 554.5L639 553ZM642.1 551.4L645.3 549.7L643.8 548.2ZM615.5 578L613.8 581.2L612.3 579.7ZM615.5 578L618.6 576.4L617.1 574.9ZM572.6 620.9L571 624L569.5 622.5ZM572.6 620.9L575.8 619.2L574.3 617.7ZM546.8 646.7L545.2 649.9L543.6 648.3ZM546.8 646.7L550 645.1L548.4 643.5ZM520.8 672.7L519.2 675.9L517.6 674.3ZM520.8 672.7L524 671.1L522.4 669.5ZM493.4 700.1L491.7 703.3L490.2 701.8ZM493.4 700.1L496.5 698.5L495 697ZM431.7 761.8L430.1 765L428.5 763.4ZM431.7 761.8L434.9 760.2L433.3 758.6ZM441.4 864.6L444.6 866.2L443 867.8ZM441.4 864.6L439.8 861.4L438.2 863ZM451.4 874.6L454.6 876.2L453 877.8ZM451.4 874.6L449.8 871.4L448.2 873ZM478.4 901.6L481.6 903.2L480 904.8ZM478.4 901.6L476.8 898.4L475.2 900ZM531.4 954.6L534.6 956.2L533 957.8ZM531.4 954.6L529.8 951.4L528.2 953ZM768.8 630.8L767.1 633.9L765.6 632.4ZM768.8 630.8L771.9 629.1L770.4 627.6ZM703.8 695.8L702.1 698.9L700.6 697.4ZM703.8 695.8L706.9 694.1L705.4 692.6ZM689.2 710.2L687.6 713.4L686.1 711.9ZM689.2 710.2L692.4 708.6L690.9 707.1ZM609.2 790.2L607.6 793.4L606.1 791.9ZM609.2 790.2L612.4 788.6L610.9 787.1ZM561.2 838.2L559.6 841.4L558.1 839.9ZM561.2 838.2L564.4 836.6L562.9 835.1ZM542.2 857.2L540.6 860.4L539.1 858.9ZM542.2 857.2L545.4 855.6L543.9 854.1ZM769.5 552.5L772.7 554.1L771.1 555.7ZM769.5 552.5L767.9 549.3L766.3 550.9ZM862.5 645.5L865.7 647.1L864.1 648.7ZM862.5 645.5L860.9 642.3L859.3 643.9ZM717 605L720.2 606.6L718.6 608.2ZM717 605L715.4 601.8L713.8 603.4ZM779.5 667.5L782.7 669.1L781.1 670.7ZM779.5 667.5L777.9 664.3L776.3 665.9ZM521.5 800.5L524.7 802.1L523.1 803.7ZM521.5 800.5L519.9 797.3L518.3 798.9ZM624.5 903.5L627.7 905.1L626.1 906.7ZM624.5 903.5L622.9 900.3L621.3 901.9ZM620.5 931.5L618.9 934.7L617.3 933.1ZM620.5 931.5L623.7 929.9L622.1 928.3ZM696 856L694.4 859.2L692.8 857.6ZM696 856L699.2 854.4L697.6 852.8ZM899 682L902.2 683.6L900.6 685.2ZM899 682L897.4 678.8L895.8 680.4ZM922 788L920.4 791.2L918.8 789.6ZM922 788L925.2 786.4L923.6 784.8ZM853.5 856.5L851.9 859.7L850.3 858.1ZM853.5 856.5L856.7 854.9L855.1 853.3ZM780 930L778.4 933.2L776.8 931.6ZM780 930L783.2 928.4L781.6 926.8ZM668.8 821.2L671.9 822.9L670.4 824.4ZM668.8 821.2L667.1 818.1L665.6 819.6ZM687.8 840.2L690.9 841.9L689.4 843.4ZM687.8 840.2L686.1 837.1L684.6 838.6ZM717.8 870.2L720.9 871.9L719.4 873.4ZM717.8 870.2L716.1 867.1L714.6 868.6ZM699.5 847.5L697.9 850.7L696.3 849.1ZM699.5 847.5L702.7 845.9L701.1 844.3ZM761.5 785.5L759.9 788.7L758.3 787.1ZM761.5 785.5L764.7 783.9L763.1 782.3ZM1400.5 665.5L1398.9 668.7L1397.3 667.1ZM1400.5 665.5L1403.7 663.9L1402.1 662.3ZM1418 648L1416.4 651.2L1414.8 649.6ZM1418 648L1421.2 646.4L1419.6 644.8ZM1319 746l5 -9 7 -5 3 -1 -2 5 -2 9 -5 0zM1359.3 848.7L1362.5 850.3L1360.9 851.9ZM1359.3 848.7L1357.7 845.5L1356.1 847.1Z" fill="#0d0d0d"/>
<path d="M876.6 184.8L922.6 184.8M877.8 184L877.8 502.4M1289.7 185.9L1336 185.9M1334.8 185L1334.8 502.7M1129.9 346.8L1158.6 346.8M963.6 523L963.6 548.3M555.1 888.5L535.1 909L587 960M748.5 698.5L768.5 678.5M710.5 698.5L729 717M689.7 719.3L707.7 737.3M698.1 796.9L716.6 815.4M667.6 822.6L650.6 839.6M825.4 645.9L842.6 663.1M859.8 679.2L880.3 699.7M879 775L898 794M1328.2 611.4L1350.5 631.5" stroke="#0d0d0d" stroke-width="2.6"/>
<path d="M879.6 403.3L922.6 403.3M1289.7 429.2L1333 429.2M1100 580L1085.6 594" stroke="#0d0d0d" stroke-width="3.2"/>
<path d="M898.4 495.4a2.6 2.6 0 1 0 5.2 0a2.6 2.6 0 1 0 -5.2 0" fill="#888"/>
<path d="M935.6 170.3L950.1 183.7M960.2 183.7L973.7 170.3M934 271.1L944.5 282.3L944.5 292.4L934 303.6M1281.4 199.7L1267.6 213.7M1281.4 281.2L1267.6 295.2M1281.4 364.9L1267.6 378.9M1061 878.8L1070 869.6L1074 869.6M1078 869.6L1082 869.6L1091 878.8M1119 878.8L1128 869L1132 869M1136 869L1140 869L1149.4 878.8" stroke="#0d0d0d" stroke-width="2"/>
<path d="M950 181.6L981.6 181.6M1175.6 222L1175.6 272" stroke="#0d0d0d" stroke-width="1" stroke-dasharray="5 3"/>
<path d="M1153 168.6L1171 168.6M1281.4 442L1281.4 486M880.2 502.4L880.2 512.5L893 523.7L902 523.7L911.6 512.5L911.6 502.4M1028.6 713.5L1028.6 743.8M1172 606L1172 612M1174 624L1174 636" stroke="#0d0d0d" stroke-width="1.6"/>
<path d="M944.1 195L944.1 378M944.1 418L944.1 474M971.4 867.6L1026.3 867.6M1055.5 867.6L1093.6 867.6M1114 867.3L1151.7 867.3M1180.8 867.3L1236.7 867.3" stroke="#0d0d0d" stroke-width="1" stroke-dasharray="8 4"/>
<path d="M932 456L932 470M960 337.6L960 360M987 768L1016 768" stroke="#0d0d0d" stroke-width="1.8"/>
<path d="M986.5 337.6A24 24 0 0 1 968.7 360.8M1057.5 337.6A26 26 0 0 0 1079 363.2M1122 223.1A28 28 0 0 1 1095 251.1M1129.9 319.4A27.6 27.6 0 0 1 1157.5 347M1136.7 312.1A22 22 0 0 1 1117.9 326.5M1053.4 546.5A27.6 27.6 0 0 1 1081 518.9M963.6 523.3A25 25 0 0 1 988.6 548.3M1127.4 401.9A30 30 0 0 1 1100 372M1135.6 372.8A26.6 26.6 0 0 1 1162.2 399.4M1255 577A31 31 0 0 1 1281.7 546.3M905.4 630A27 27 0 0 1 879.3 657M979.5 568.9A25 25 0 0 1 986.8 585.7M1081.9 573.4A26 26 0 0 1 1101.8 582.7M987.1 766.2A28 28 0 0 1 1015.1 738.2M1059 713.5A30.4 30.4 0 0 1 1029.7 743.9M1076.8 734.3A33 33 0 0 1 1109.8 767.3M1128.6 636A28 28 0 0 1 1155.6 664M1259.6 637A28 28 0 0 1 1287.5 663M1355.9 616.6A32 32 0 0 1 1318.3 648.1M1045 797A27 27 0 0 1 1018 770M1072 770A27 27 0 0 1 1045 797M766.5 680.5A27 27 0 0 1 766.5 718.7M709.9 697.9A27 27 0 0 1 748.1 697.9M689.3 755.7A26 26 0 0 1 689.3 718.9M697.6 796.3A27 27 0 0 1 735.7 796.3M668.3 822A25 25 0 0 0 633 822M825.3 645.8A24.4 24.4 0 0 1 859.9 645.8M860.1 679.5A28.5 28.5 0 0 1 900.5 679.5M878.9 813.1A27 27 0 0 1 878.9 774.9M1350.1 589.5A31 31 0 0 1 1350.1 633.3M1361.4 747.2A29 29 0 0 1 1318.7 745.3M1326.3 808.6A27 27 0 0 1 1327.9 772.1M1410.2 769.6A27 27 0 0 1 1384.8 751.8M1413 826A30 30 0 0 1 1399.8 789.7" stroke="#0d0d0d" stroke-width="1" stroke-dasharray="3 2"/>
<path d="M1064 333.6L1083.5 333.6M1113.8 306.5L1130 290.4M1284 546.4L1284 577M1288.4 546.4L1288.4 577M881 513L893 523.7M961.8 586.6L979.4 568.6M1029.7 622.7L1076.8 622.7L1076.8 657.5L1029.7 657.5ZM1259.6 636L1259.6 665M945.7 889.5L945.7 934.5M944.6 933.6L1036.6 933.6M1035.3 889.5L1035.3 934.5M1171 889.5L1171 934.5M1170 933.6L1262 933.6M1260.8 889.5L1260.8 934.5M795 763L817 763M1340.9 726.7L1361.6 746.2M1326.4 808.2L1347 791.2M1410.2 742.6L1410.2 769.3M1405 778L1428 800" stroke="#0d0d0d" stroke-width="2.4"/>
<path d="M1054 338.6L1083 338.6" stroke="#555" stroke-width="2.4"/>
<path d="M1109.8 188.4L1109.6 190.3L1109.1 192.1L1108.3 193.6L1107.2 194.8L1105.9 195.5L1104.6 195.8L1103.3 195.5L1102 194.8L1100.9 193.6L1100.1 192.1L1099.6 190.3L1099.4 188.4L1099.6 186.5L1100.1 184.7L1100.9 183.2L1102 182L1103.3 181.3L1104.6 181L1105.9 181.3L1107.2 182L1108.3 183.2L1109.1 184.7L1109.6 186.5ZM1123 171L1151 171L1151 196.3L1123 196.3ZM1156.3 176L1156 214L1158 217L1168 217L1170 214L1169.6 176L1166 172.6L1160 172.6L1156.3 176M1296.8 521.4a4.2 4.2 0 1 0 8.4 0a4.2 4.2 0 1 0 -8.4 0M865 593L890 593L890 609.6L865 609.6ZM874.2 564.5L956.9 564.5L956.9 584.6L874.2 584.6ZM912 564.5L912 584.6M986 647L1005 647L1005 662.6L986 662.6ZM940 716L955.4 716L955.4 724L952.6 726.6L942.6 726.6L940 724ZM1097.6 805L1108 805L1108 814.6L1097.6 814.6ZM1097.6 816L1108 816L1108 825L1097.6 825ZM925 810L938 810L938 820.6L925 820.6ZM925 822L938 822L938 832L925 832ZM1273 818L1285 818L1285 828L1273 828ZM1273 829.6L1285 829.6L1285 840L1273 840ZM510.2 730.8L540.7 761.3M621.7 619.3L652.7 650.3M829.9 748.7L831.1 750.1L831.9 751.6L832.4 753.2L832.5 754.7L832.1 756.1L831.3 757.1L830.3 757.9L828.9 758.3L827.4 758.2L825.8 757.7L824.3 756.9L822.9 755.7L821.7 754.3L820.9 752.8L820.4 751.2L820.3 749.7L820.7 748.3L821.5 747.3L822.5 746.5L823.9 746.1L825.4 746.2L827 746.7L828.5 747.5ZM897 752.5L868 723.6M1302 670L1310 670L1310 678L1302 678ZM1341.5 653.5L1349 646L1357 654L1349.5 661.5Z" stroke="#666" stroke-width="1"/>
<path d="M1130.3 185.9a6.4 6.4 0 1 0 12.8 0a6.4 6.4 0 1 0 -12.8 0M1164.9 289L1164.7 290.9L1164.2 292.7L1163.4 294.2L1162.3 295.4L1161 296.1L1159.7 296.4L1158.4 296.1L1157.1 295.4L1156 294.2L1155.2 292.7L1154.7 290.9L1154.5 289L1154.7 287.1L1155.2 285.3L1156 283.8L1157.1 282.6L1158.4 281.9L1159.7 281.6L1161 281.9L1162.3 282.6L1163.4 283.8L1164.2 285.3L1164.7 287.1ZM1052.6 401L1053.6 385L1060 384.4M1135 414L1147 408M1135 424L1147 418.6M1132 574L1135 563M1135 563L1147 560.6M1307.6 514.2L1307.6 536M1309.6 514.2L1309.6 536M896.5 504L896.5 522M880 597L888.6 597L888.6 608.6L880 608.6ZM873.6 577a6.8 6.8 0 1 0 13.6 0a6.8 6.8 0 1 0 -13.6 0M943.8 645L943.6 647L943.1 648.8L942.3 650.4L941.3 651.6L940.1 652.3L938.8 652.6L937.5 652.3L936.3 651.6L935.3 650.4L934.5 648.8L934 647L933.8 645L934 643L934.5 641.2L935.3 639.6L936.3 638.4L937.5 637.7L938.8 637.4L940.1 637.7L941.3 638.4L942.3 639.6L943.1 641.2L943.6 643ZM975.6 650L975.4 652L974.9 653.8L974.1 655.4L973.1 656.6L971.9 657.3L970.6 657.6L969.3 657.3L968.1 656.6L967.1 655.4L966.3 653.8L965.8 652L965.6 650L965.8 648L966.3 646.2L967.1 644.6L968.1 643.4L969.3 642.7L970.6 642.4L971.9 642.7L973.1 643.4L974.1 644.6L974.9 646.2L975.4 648ZM997.4 562L997.4 585M1024.6 567.6L1077.9 567.6M1042.4 552.4L1042.4 567.6M1024.6 602.6L1077.9 602.6M936.6 670.3L936.6 677M942.4 670.3L942.4 677M937.1 713.5L958 713.5L958 726L955 729.2L940 729.2L937.1 726ZM926.1 737L927.2 738.5L927.9 740.1L928.3 741.7L928.3 743.2L927.9 744.4L927.1 745.4L926 745.9L924.7 746.1L923.3 745.9L921.8 745.2L920.4 744.2L919.1 743L918 741.5L917.3 739.9L916.9 738.3L916.9 736.8L917.3 735.6L918.1 734.6L919.2 734.1L920.5 733.9L921.9 734.1L923.4 734.8L924.8 735.8ZM1132 573L1134.6 564M1134.6 564L1146 562.6M1132 588L1134.6 579M1134.6 579L1146 577.6M1132 608L1134.6 599M1134.6 599L1146 597.6M1132 624L1134.6 615M1134.6 615L1146 613.6M1174.6 600.2L1226.3 600.2L1226.3 646.1L1174.6 646.1ZM1296 649.4L1306.6 649.4L1296 660ZM1094.6 770.6L1094.6 839.6M1095 779L1110 774M1094.6 781L1111.5 781M1096 803L1109.6 803L1109.6 826L1096 826ZM930.6 889.5L975 934.5M946 889.5L977 922M747.5 562.7L768 541.6M679.2 632.4L698.5 612.1M609.7 702.5L629 681.1M557 754.9L576.1 733.8M509 823.3L529.8 834M580 892.3L599.5 908M810.5 738.3L809.1 739.4L807.5 740.3L806 740.8L804.5 740.9L803.3 740.6L802.3 739.9L801.6 738.9L801.3 737.7L801.4 736.2L801.9 734.7L802.8 733.1L803.9 731.7L805.3 730.6L806.9 729.7L808.4 729.2L809.9 729.1L811.1 729.4L812.1 730.1L812.8 731.1L813.1 732.3L813 733.8L812.5 735.3L811.6 736.9ZM796 759L822.5 732.5M908.7 883.9L902.6 893M950.5 780.1L949.8 781.7L948.7 783.2L947.6 784.3L946.3 785L945 785.3L943.8 785.1L942.8 784.4L942 783.4L941.5 782L941.3 780.4L941.4 778.7L941.9 776.9L942.6 775.3L943.7 773.8L944.8 772.7L946.1 772L947.4 771.7L948.6 771.9L949.6 772.6L950.4 773.6L950.9 775L951.1 776.6L951 778.3ZM947.5 760.6L946.2 761.8L944.8 762.8L943.3 763.5L941.9 763.7L940.6 763.5L939.5 763L938.7 762L938.3 760.8L938.3 759.3L938.7 757.7L939.4 756.1L940.5 754.6L941.8 753.4L943.2 752.4L944.7 751.7L946.1 751.5L947.4 751.7L948.5 752.2L949.3 753.2L949.7 754.4L949.7 755.9L949.3 757.5L948.6 759.1ZM1318.2 667.2L1316.7 668.4L1315.1 669.4L1313.5 669.9L1312 670L1310.6 669.7L1309.6 669L1308.9 668L1308.6 666.6L1308.7 665.1L1309.2 663.5L1310.2 661.9L1311.4 660.4L1312.9 659.2L1314.5 658.2L1316.1 657.7L1317.6 657.6L1319 657.9L1320 658.6L1320.7 659.6L1321 661L1320.9 662.5L1320.4 664.1L1319.4 665.7ZM1403.3 723.7L1404.4 725.1L1405.3 726.7L1405.8 728.2L1405.9 729.7L1405.6 730.9L1404.9 731.9L1403.9 732.6L1402.7 732.9L1401.2 732.8L1399.7 732.3L1398.1 731.4L1396.7 730.3L1395.6 728.9L1394.7 727.3L1394.2 725.8L1394.1 724.3L1394.4 723.1L1395.1 722.1L1396.1 721.4L1397.3 721.1L1398.8 721.2L1400.3 721.7L1401.9 722.6Z" stroke="#444" stroke-width="1"/>
<path d="M1153.3 171L1153.3 218L1155.3 220.4L1171 220.4L1173 218L1173 171M990.9 384.7L1028.6 384.7L1028.6 401.1L990.9 401.1ZM1036.8 392a5.8 5.8 0 1 0 11.6 0a5.8 5.8 0 1 0 -11.6 0M1286 514.2L1310.2 514.2L1310.2 532.6L1286 532.6ZM1295 521.4a6 6 0 1 0 12 0a6 6 0 1 0 -12 0M1337.7 514.2L1374.5 514.2L1374.5 531.4L1337.7 531.4ZM1025.2 588a8.5 8.5 0 1 0 17 0a8.5 8.5 0 1 0 -17 0M1198.8 618.3L1180 583M1200.3 618.3L1194 583M1201.4 618.3L1205.2 583M1202.7 618.3L1217 583M1204.5 618.3L1234.1 583M1207.2 618.3L1245.2 592.7M1208.2 619.9L1245.2 606.4M1208.2 621.7L1245.2 617.9M1208.2 623.5L1245.2 628.7M1208.2 625.4L1245.2 640.4M1206 626.7L1245.2 659.6M1203.8 626.7L1230.1 665.7M1202.5 626.7L1216.7 665.7M1201.4 626.7L1205.5 665.7M1200.4 626.7L1194.9 665.7M1193.8 625.1L1157 638.5M1193.8 623.5L1157 628.7M1193.8 622L1157 619.4M1193.8 620.4L1157 609.9M1191.4 626.6L1191.4 665.7M1201 626.6L1201 665.7M1201 583L1201 618.6M1096 789.6a6.6 6.6 0 1 0 13.2 0a6.6 6.6 0 1 0 -13.2 0M922.8 807L940 807L940 844.7L922.8 844.7ZM1271.1 804.8L1286.5 804.8L1286.5 841.5L1271.1 841.5ZM764.8 542.2L774.8 552.2M744.8 562.2L754.8 572.2M749.8 539.2L746.8 542.2M695.8 612.2L705.8 622.2M675.8 632.2L685.8 642.2M680.8 609.2L677.8 612.2M626.4 681.8L636.4 691.8M606.4 701.8L616.4 711.8M611.4 678.8L608.4 681.8M573.5 734.3L583.5 744.3M553.5 754.3L563.5 764.3M558.5 731.3L555.5 734.3M736.7 551a2.6 2.6 0 1 0 5.2 0a2.6 2.6 0 1 0 -5.2 0M666.8 621.1a2.6 2.6 0 1 0 5.2 0a2.6 2.6 0 1 0 -5.2 0M598.2 693.9a2.6 2.6 0 1 0 5.2 0a2.6 2.6 0 1 0 -5.2 0M545.7 743.7a2.6 2.6 0 1 0 5.2 0a2.6 2.6 0 1 0 -5.2 0M495.9 826L595 925M796.5 763.5L785 775L805 795M720 870L840 990M902.2 904.8L930.2 932.8M890 778L907 761L924 778L907 795ZM899.9 778.5a6.8 6.8 0 1 0 13.6 0a6.8 6.8 0 1 0 -13.6 0M872.2 728.5L877.3 727L878.9 730.3L886.3 737L888.5 742.6L878.4 740.4L875.1 737ZM1332 699L1365.5 665.5L1375.5 675.5L1342 709ZM1294.2 779a6.4 6.4 0 1 0 12.8 0a6.4 6.4 0 1 0 -12.8 0M1393 733a3 3 0 1 0 6 0a3 3 0 1 0 -6 0M1305 865L1320 880" stroke="#333" stroke-width="1"/>
<path d="M1136 226L1174 259M1174 226L1136 259" stroke="#555" stroke-width="1" stroke-dasharray="6 3"/>
<path d="M1134 264L1145 264L1145 284.4L1134 284.4ZM1153 276L1166.4 276L1166.4 281L1153 281ZM1166 300L1172.4 300L1172.4 315.4L1166 315.4ZM1167.4 307L1171 307L1171 314L1167.4 314ZM1004 386L1027.6 386L1027.6 400.2L1004 400.2ZM1110 421L1120 421M1350 516.4L1361 516.4L1361 529.6L1350 529.6ZM1362.4 516.4L1373 516.4L1373 529.6L1362.4 529.6ZM848.2 589.1L905.3 589.1L905.3 623.9L848.2 623.9ZM889 570L898 570L898 581L889 581ZM945.4 597.6a2.2 2.2 0 1 0 4.4 0a2.2 2.2 0 1 0 -4.4 0M912 593L928 593L927 604L921 606.6L914 604.6ZM933.6 655L944.4 655L944.4 664L933.6 664ZM965 660L976 660L976 665L965 665ZM999.6 592L1012 592L1012 607L1001 607.6L999 600ZM1022 638.9L1082 638.9M1049.4 614.9L1049.4 665.3M964 718L966 716.4L1007 716.4L1009.6 719L1010 730L1007 733L966 733L964 731ZM1110 583L1122 583M1110 619L1122 619M1196.4 620.4L1206.2 620.4L1206.2 624.8L1196.4 624.8ZM773 718L779 712L792 725L786 731ZM1330.5 681.5L1331.8 682.9L1332.7 684.6L1333.2 686.2L1333.3 687.8L1333 689.1L1332.2 690.2L1331.1 691L1329.8 691.3L1328.2 691.2L1326.6 690.7L1324.9 689.8L1323.5 688.5L1322.2 687.1L1321.3 685.4L1320.8 683.8L1320.7 682.2L1321 680.9L1321.8 679.8L1322.9 679L1324.2 678.7L1325.8 678.8L1327.4 679.3L1329.1 680.2ZM1295 741L1299 755M1284 752L1288 766M1273 763L1277 777M1262 774L1266 788M1333 818L1368 818L1372 814L1368 822L1333 822" stroke="#555" stroke-width="1"/>
<path d="M1268.8 195.7L1268.8 241.4M1268.8 277.2L1268.8 322.7M1268.8 360.9L1268.8 406.1M1269.3 433.8L1269.3 492.4" stroke="#0d0d0d" stroke-width="1" stroke-dasharray="7 3"/>
<path d="M1267.6 222.9L1281.4 237.4M1267.6 304.2L1281.4 318.7M1267.6 387.6L1281.4 402.1M902 523.7L911 513M1176.4 624L1176.4 636" stroke="#0d0d0d" stroke-width="1.2"/>
<path d="M991.5 385.5h12v15h-12z" fill="#8a8a8a"/>
<path d="M1038.6 392a4 4 0 1 0 8 0a4 4 0 1 0 -8 0M934.5 550.6L960.2 550.6L960.2 570.7L934.5 570.7ZM1027.3 588a6.4 6.4 0 1 0 12.8 0a6.4 6.4 0 1 0 -12.8 0M1098 789.6a4.6 4.6 0 1 0 9.2 0a4.6 4.6 0 1 0 -9.2 0M901.9 778.5a4.8 4.8 0 1 0 9.6 0a4.8 4.8 0 1 0 -9.6 0M1335.5 698.5L1365 669L1372 676L1342.5 705.5ZM1296.2 779a4.4 4.4 0 1 0 8.8 0a4.4 4.4 0 1 0 -8.8 0" stroke="#777" stroke-width="1"/>
<path d="M1338.5 517h10.5v13.6h-10.5zM1096.4 827h12.8v11.6h-12.8zM924.4 833.4h14v10h-14zM1272 806h13.4v10.6h-13.4z" fill="#777"/>
<path d="M1336 512.2L1374 512.2" stroke="#0d0d0d" stroke-width="1" stroke-dasharray="2 1.6"/>
<path d="M876 523.7L916 523.7" stroke="#0d0d0d" stroke-width="1" stroke-dasharray="6 3"/>
<path d="M987.4 648.4L1003.6 648.4L1003.6 661.2L987.4 661.2Z" stroke="#888" stroke-width="1"/>
<path d="M1025 568.4h12v5h-12z" fill="#333"/>
<path d="M1076.8 731.4L1112.6 767.3M1112.6 731.4L1076.8 767.3" stroke="#444" stroke-width="1" stroke-dasharray="6 3"/>
<path d="M1184 645.6L1226 645.6M1076 768L1104.5 768M741.5 562.7L760.6 562.7M768 537.6L768 555.5M673.2 632.4L691.1 632.4M698.5 608.1L698.5 625M603.7 702.5L622.7 702.5M629 677.1L629 695.1M551 754.9L568.9 754.9M576.1 729.8L576.1 747.7M503.2 823.3L521.8 823.3M529.8 829.7L529.8 849.1M573.7 892.3L592.3 892.3M599.5 903.7L599.5 918.3M908.7 883.9L921.9 883.9M902.6 889L902.6 904.2M862.1 926.5L880.3 926.5M1282 883L1298 883M1305 889L1305 906M1327 924L1348 924M1355 930L1355 934" stroke="#0d0d0d" stroke-width="2.2"/>
<path d="M977 881L1024.1 881M1186.8 881L1233.2 881" stroke="#0d0d0d" stroke-width="1.6" stroke-dasharray="2.4 1.6"/>
<path d="M998 883.6L1024.1 883.6M1208 883.6L1233.2 883.6" stroke="#0d0d0d" stroke-width="1.4" stroke-dasharray="2.4 1.6"/>
<path d="M1060.6 885.4L1091.3 885.4M1118.4 885.4L1150 885.4" stroke="#666" stroke-width="1.6"/>
<path d="M1136.4 896.2a2.6 2.6 0 1 0 5.2 0a2.6 2.6 0 1 0 -5.2 0" fill="#111"/>
<path d="M930.6 935L930.6 960M977 935L977 960M1024.1 935L1024.1 960M1060.6 935L1060.6 960M1091.3 935L1091.3 960M1118.4 935L1118.4 960M1150 935L1150 960M1186.8 935L1186.8 960M1233.2 935L1233.2 960M1278.7 935L1278.7 960M975 935L1000 960M872.5 934.5L848.5 958.5M865.5 934.5L845 955M887.5 933.5L860.5 960.5M930.2 932.8L948.8 951.2M1326 936L1350 960M1329.5 932.5L1353.5 956.5" stroke="#bbb" stroke-width="1"/>
<path d="M1162 935L1162 960" stroke="#999" stroke-width="1"/>
<path d="M930 957.6L1290 957.6" stroke="#aaa" stroke-width="1" stroke-dasharray="6 5"/>
<path d="M1262 935L1290 960" stroke="#bbb" stroke-width="2"/>
<path d="M744.5 493.5L507.2 730.8" stroke="#555" stroke-width="2.6"/>
<path d="M744.5 493.5L776 525M507.2 730.8L539.2 762.8M619.2 619.8L651.2 651.8" stroke="#444" stroke-width="2.4"/>
<path d="M774.8 552.2L754.8 572.2M705.8 622.2L685.8 642.2M636.4 691.8L616.4 711.8M583.5 744.3L563.5 764.3M1285 905L1315 875" stroke="#333" stroke-width="1" stroke-dasharray="7 4"/>
<path d="M362.7 857.9L362.7 943.4L412.4 943.4Z" stroke="#2f5fff" stroke-width="1.2"/>
<path d="M362.7 936.4L370.5 936.4L370.5 943.4M363.8 881.3L370.1 886.2L376.1 880.6M370.1 886.2L370.1 892.9M392.1 930.3L403.7 942.2M404.4 929.6L392.1 942.9" stroke="#2f5fff" stroke-width="1"/>
<text x="818" y="330" font-size="5.5" text-anchor="middle" fill="#0d0d0d" font-weight="bold" stroke="#fff" stroke-width="2.2" paint-order="stroke" transform="rotate(-90 818 330)">1310</text>
<text x="822.5" y="245" font-size="5.5" text-anchor="middle" fill="#0d0d0d" font-weight="bold" transform="rotate(-90 822.5 245)">65</text>
<text x="833.7" y="178" font-size="5.5" text-anchor="middle" fill="#0d0d0d" font-weight="bold" stroke="#fff" stroke-width="2.2" paint-order="stroke" transform="rotate(-90 833.7 178)">180</text>
<text x="833.7" y="223" font-size="5.5" text-anchor="middle" fill="#0d0d0d" font-weight="bold" stroke="#fff" stroke-width="2.2" paint-order="stroke" transform="rotate(-90 833.7 223)">150</text>
<text x="833.7" y="287" font-size="5.5" text-anchor="middle" fill="#0d0d0d" font-weight="bold" stroke="#fff" stroke-width="2.2" paint-order="stroke" transform="rotate(-90 833.7 287)">180</text>
<text x="833.7" y="322" font-size="5.5" text-anchor="middle" fill="#0d0d0d" font-weight="bold" stroke="#fff" stroke-width="2.2" paint-order="stroke" transform="rotate(-90 833.7 322)">150</text>
<text x="833.7" y="355" font-size="5.5" text-anchor="middle" fill="#0d0d0d" font-weight="bold" stroke="#fff" stroke-width="2.2" paint-order="stroke" transform="rotate(-90 833.7 355)">180</text>
<text x="833.7" y="398" font-size="5.5" text-anchor="middle" fill="#0d0d0d" font-weight="bold" stroke="#fff" stroke-width="2.2" paint-order="stroke" transform="rotate(-90 833.7 398)">177</text>
<text x="833.7" y="449" font-size="5.5" text-anchor="middle" fill="#0d0d0d" font-weight="bold" stroke="#fff" stroke-width="2.2" paint-order="stroke" transform="rotate(-90 833.7 449)">150</text>
<text x="833.7" y="487" font-size="5.5" text-anchor="middle" fill="#0d0d0d" font-weight="bold" stroke="#fff" stroke-width="2.2" paint-order="stroke" transform="rotate(-90 833.7 487)">140</text>
<text x="1348.8" y="179" font-size="5.5" text-anchor="middle" fill="#0d0d0d" font-weight="bold" stroke="#fff" stroke-width="2.2" paint-order="stroke" transform="rotate(-90 1348.8 179)">180</text>
<text x="1348.8" y="218" font-size="5.5" text-anchor="middle" fill="#0d0d0d" font-weight="bold" stroke="#fff" stroke-width="2.2" paint-order="stroke" transform="rotate(-90 1348.8 218)">150</text>
<text x="1348.8" y="300" font-size="5.5" text-anchor="middle" fill="#0d0d0d" font-weight="bold" stroke="#fff" stroke-width="2.2" paint-order="stroke" transform="rotate(-90 1348.8 300)">180</text>
<text x="1348.8" y="341" font-size="5.5" text-anchor="middle" fill="#0d0d0d" font-weight="bold" stroke="#fff" stroke-width="2.2" paint-order="stroke" transform="rotate(-90 1348.8 341)">150</text>
<text x="1348.8" y="383" font-size="5.5" text-anchor="middle" fill="#0d0d0d" font-weight="bold" stroke="#fff" stroke-width="2.2" paint-order="stroke" transform="rotate(-90 1348.8 383)">180</text>
<text x="1348.8" y="420" font-size="5.5" text-anchor="middle" fill="#0d0d0d" font-weight="bold" stroke="#fff" stroke-width="2.2" paint-order="stroke" transform="rotate(-90 1348.8 420)">150</text>
<text x="1348.8" y="463" font-size="5.5" text-anchor="middle" fill="#0d0d0d" font-weight="bold" stroke="#fff" stroke-width="2.2" paint-order="stroke" transform="rotate(-90 1348.8 463)">150</text>
<text x="1348.8" y="499" font-size="5.5" text-anchor="middle" fill="#0d0d0d" font-weight="bold" stroke="#fff" stroke-width="2.2" paint-order="stroke" transform="rotate(-90 1348.8 499)">40</text>
<text x="1345" y="262" font-size="5.5" text-anchor="middle" fill="#0d0d0d" font-weight="bold" transform="rotate(-90 1345 262)">144</text>
<text x="954.5" y="180" font-size="4" text-anchor="middle" fill="#0d0d0d" transform="rotate(-20 954.5 180)">V</text>
<text x="1027.6" y="166" font-size="5.5" text-anchor="middle" fill="#0d0d0d" font-weight="bold" stroke="#fff" stroke-width="2.2" paint-order="stroke" transform="rotate(-90 1027.6 166)">30</text>
<text x="1027.6" y="253" font-size="5.5" text-anchor="middle" fill="#0d0d0d" font-weight="bold" stroke="#fff" stroke-width="2.2" paint-order="stroke" transform="rotate(-90 1027.6 253)">529</text>
<text x="1027.6" y="366" font-size="5.5" text-anchor="middle" fill="#0d0d0d" font-weight="bold" stroke="#fff" stroke-width="2.2" paint-order="stroke" transform="rotate(-90 1027.6 366)">230</text>
<text x="1027.6" y="478" font-size="5.5" text-anchor="middle" fill="#0d0d0d" font-weight="bold" stroke="#fff" stroke-width="2.2" paint-order="stroke" transform="rotate(-90 1027.6 478)">446</text>
<text x="1012" y="260" font-size="5.5" text-anchor="middle" fill="#0d0d0d" font-weight="bold" stroke="#fff" stroke-width="2.2" paint-order="stroke">509</text>
<text x="1007.5" y="306.5" font-size="5.5" text-anchor="middle" fill="#0d0d0d" font-weight="bold" stroke="#fff" stroke-width="2.2" paint-order="stroke">479</text>
<text x="1105" y="306.5" font-size="5.5" text-anchor="middle" fill="#0d0d0d" font-weight="bold" stroke="#fff" stroke-width="2.2" paint-order="stroke">159</text>
<text x="1150" y="306.5" font-size="5.5" text-anchor="middle" fill="#0d0d0d" font-weight="bold" stroke="#fff" stroke-width="2.2" paint-order="stroke">130</text>
<text x="1226" y="306.5" font-size="5.5" text-anchor="middle" fill="#0d0d0d" font-weight="bold" stroke="#fff" stroke-width="2.2" paint-order="stroke">327</text>
<text x="980" y="221" font-size="4" text-anchor="middle" fill="#0d0d0d">SEJOUR</text>
<text x="982" y="228" font-size="3.6" text-anchor="middle" fill="#0d0d0d">S: 21.09m²</text>
<text x="940.5" y="288" font-size="4" text-anchor="middle" fill="#0d0d0d" transform="rotate(-90 940.5 288)">V</text>
<text x="1013.5" y="318" font-size="5" text-anchor="middle" fill="#0d0d0d" font-weight="bold" transform="rotate(-90 1013.5 318)">7</text>
<text x="1114" y="202" font-size="3.6" text-anchor="middle" fill="#0d0d0d">WC</text>
<text x="1114.5" y="210.5" font-size="3.4" text-anchor="middle" fill="#0d0d0d">S: 1.42m²</text>
<text x="1133" y="221.6" font-size="5.5" text-anchor="middle" fill="#0d0d0d" font-weight="bold" stroke="#fff" stroke-width="2.2" paint-order="stroke">260</text>
<text x="1227" y="221.6" font-size="5.5" text-anchor="middle" fill="#0d0d0d" font-weight="bold" stroke="#fff" stroke-width="2.2" paint-order="stroke">335</text>
<text x="1187" y="210.5" font-size="5.5" text-anchor="middle" fill="#0d0d0d" font-weight="bold">7</text>
<text x="1116.1" y="345" font-size="5.5" text-anchor="middle" fill="#0d0d0d" font-weight="bold" stroke="#fff" stroke-width="2.2" paint-order="stroke" transform="rotate(-90 1116.1 345)">367</text>
<text x="1162.1" y="241" font-size="5.5" text-anchor="middle" fill="#0d0d0d" font-weight="bold" stroke="#fff" stroke-width="2.2" paint-order="stroke" transform="rotate(-90 1162.1 241)">115</text>
<text x="1162.1" y="263" font-size="5.5" text-anchor="middle" fill="#0d0d0d" font-weight="bold" stroke="#fff" stroke-width="2.2" paint-order="stroke" transform="rotate(-90 1162.1 263)">45</text>
<text x="1162.1" y="297" font-size="5.5" text-anchor="middle" fill="#0d0d0d" font-weight="bold" stroke="#fff" stroke-width="2.2" paint-order="stroke" transform="rotate(-90 1162.1 297)">67</text>
<text x="1162.1" y="332" font-size="5.5" text-anchor="middle" fill="#0d0d0d" font-weight="bold" stroke="#fff" stroke-width="2.2" paint-order="stroke" transform="rotate(-90 1162.1 332)">99</text>
<text x="1187" y="295.5" font-size="5.5" text-anchor="middle" fill="#0d0d0d" font-weight="bold">7</text>
<text x="1228" y="261" font-size="5" text-anchor="middle" fill="#0d0d0d" font-weight="bold" transform="rotate(-90 1228 261)">7</text>
<text x="1228" y="336" font-size="5" text-anchor="middle" fill="#0d0d0d" font-weight="bold" transform="rotate(-90 1228 336)">7</text>
<text x="1146" y="357" font-size="3.4" text-anchor="middle" fill="#0d0d0d">PL</text>
<text x="1148" y="364" font-size="3.2" text-anchor="middle" fill="#0d0d0d">S: 0.98m²</text>
<text x="1240.4" y="222" font-size="5.5" text-anchor="middle" fill="#0d0d0d" font-weight="bold" stroke="#fff" stroke-width="2.2" paint-order="stroke" transform="rotate(-90 1240.4 222)">302</text>
<text x="1240.4" y="312" font-size="5.5" text-anchor="middle" fill="#0d0d0d" font-weight="bold" stroke="#fff" stroke-width="2.2" paint-order="stroke" transform="rotate(-90 1240.4 312)">257</text>
<text x="1240.4" y="388" font-size="5.5" text-anchor="middle" fill="#0d0d0d" font-weight="bold" stroke="#fff" stroke-width="2.2" paint-order="stroke" transform="rotate(-90 1240.4 388)">230</text>
<text x="1240.4" y="503" font-size="5.5" text-anchor="middle" fill="#0d0d0d" font-weight="bold" stroke="#fff" stroke-width="2.2" paint-order="stroke" transform="rotate(-90 1240.4 503)">463</text>
<text x="1207" y="256" font-size="5.5" text-anchor="middle" fill="#0d0d0d" font-weight="bold" stroke="#fff" stroke-width="2.2" paint-order="stroke">464</text>
<text x="1206" y="229" font-size="3.6" text-anchor="middle" fill="#0d0d0d">CH1</text>
<text x="1213" y="239.5" font-size="3.4" text-anchor="middle" fill="#0d0d0d">S: 11.19m²</text>
<text x="1203" y="317" font-size="3.6" text-anchor="middle" fill="#0d0d0d">CH2</text>
<text x="1210" y="327.6" font-size="3.4" text-anchor="middle" fill="#0d0d0d">S: 10.42m²</text>
<text x="1273" y="220.6" font-size="4.6" text-anchor="middle" fill="#0d0d0d" transform="rotate(-90 1273 220.6)">V</text>
<text x="1273" y="301.9" font-size="4.6" text-anchor="middle" fill="#0d0d0d" transform="rotate(-90 1273 301.9)">V</text>
<text x="1273" y="385.5" font-size="4.6" text-anchor="middle" fill="#0d0d0d" transform="rotate(-90 1273 385.5)">V</text>
<text x="1377.4" y="254" font-size="8.6" text-anchor="start" fill="#0d0d0d">Mr &amp; Mme STEINER</text>
<text x="1378.6" y="264.8" font-size="8.6" text-anchor="start" fill="#0d0d0d">lot 2.1</text>
<text x="633" y="362" font-size="8.6" text-anchor="start" fill="#0d0d0d">Mr &amp; Mme MIGNOT</text>
<text x="634.6" y="373.4" font-size="8.6" text-anchor="start" fill="#0d0d0d">lot 2.2 a</text>
<text x="892" y="324" font-size="3.6" text-anchor="middle" fill="#0d0d0d">BALCON</text>
<text x="893" y="331" font-size="3.4" text-anchor="middle" fill="#0d0d0d">S: 12.48m²</text>
<text x="892" y="440.5" font-size="3.6" text-anchor="middle" fill="#0d0d0d">BALCON</text>
<text x="891" y="448.5" font-size="3.4" text-anchor="middle" fill="#0d0d0d">S: 4.48m²</text>
<text x="1302" y="454.5" font-size="3.6" text-anchor="middle" fill="#0d0d0d">BALCON</text>
<text x="1302" y="464" font-size="3.4" text-anchor="middle" fill="#0d0d0d">S: 2.30m²</text>
<text x="1301" y="326.4" font-size="3.6" text-anchor="middle" fill="#0d0d0d">BALCON</text>
<text x="1303" y="336" font-size="3.4" text-anchor="middle" fill="#0d0d0d">S: 12.08m²</text>
<text x="1071.5" y="381" font-size="3.4" text-anchor="middle" fill="#0d0d0d">PL</text>
<text x="1072" y="387" font-size="3" text-anchor="middle" fill="#0d0d0d">S: 0.88m²</text>
<text x="1002" y="357.5" font-size="3.8" text-anchor="middle" fill="#0d0d0d">CUISINE</text>
<text x="1002" y="367.5" font-size="3.4" text-anchor="middle" fill="#0d0d0d">S: 5.38m²</text>
<text x="1101.5" y="358.6" font-size="3.6" text-anchor="middle" fill="#0d0d0d">ENTREE</text>
<text x="1101.6" y="368.4" font-size="3.4" text-anchor="middle" fill="#0d0d0d">S: 5.46m²</text>
<text x="1007" y="467.7" font-size="5.5" text-anchor="middle" fill="#0d0d0d" font-weight="bold" stroke="#fff" stroke-width="2.2" paint-order="stroke">480</text>
<text x="1106.5" y="467.7" font-size="5.5" text-anchor="middle" fill="#0d0d0d" font-weight="bold" stroke="#fff" stroke-width="2.2" paint-order="stroke">120</text>
<text x="1205" y="467.7" font-size="5.5" text-anchor="middle" fill="#0d0d0d" font-weight="bold" stroke="#fff" stroke-width="2.2" paint-order="stroke">481</text>
<text x="1099.6" y="455.6" font-size="4.6" text-anchor="middle" fill="#0d0d0d" font-weight="bold">10</text>
<text x="1141" y="456" font-size="4.6" text-anchor="middle" fill="#0d0d0d" font-weight="bold">10</text>
<text x="988.5" y="496" font-size="3.8" text-anchor="middle" fill="#0d0d0d">SEJOUR</text>
<text x="1047" y="508.6" font-size="3.4" text-anchor="middle" fill="#0d0d0d">PL</text>
<text x="1072.5" y="508" font-size="5.5" text-anchor="middle" fill="#0d0d0d" font-weight="bold" stroke="#fff" stroke-width="2.2" paint-order="stroke" transform="rotate(-90 1072.5 508)">60</text>
<text x="1072.5" y="534" font-size="5.5" text-anchor="middle" fill="#0d0d0d" font-weight="bold" stroke="#fff" stroke-width="2.2" paint-order="stroke" transform="rotate(-90 1072.5 534)">120</text>
<text x="1059.6" y="486" font-size="5" text-anchor="middle" fill="#0d0d0d" font-weight="bold" transform="rotate(-90 1059.6 486)">7</text>
<text x="1096.6" y="419" font-size="9.4" text-anchor="start" fill="#444">2.1</text>
<text x="1090.4" y="436" font-size="9.4" text-anchor="start" fill="#444">83.36m²</text>
<text x="1097" y="447.4" font-size="9.4" text-anchor="start" fill="#444">4P</text>
<text x="1116.4" y="418.4" font-size="3" text-anchor="middle" fill="#0d0d0d">+1</text>
<text x="1113.6" y="425.4" font-size="3.2" text-anchor="middle" fill="#0d0d0d">10.1m²</text>
<text x="1099" y="541.6" font-size="9.4" text-anchor="start" fill="#444">2.2 a</text>
<text x="1209" y="382" font-size="3.6" text-anchor="middle" fill="#0d0d0d">CH3</text>
<text x="1214.5" y="392.5" font-size="3.4" text-anchor="middle" fill="#0d0d0d">S: 10.92m²</text>
<text x="1228.6" y="417" font-size="4.6" text-anchor="middle" fill="#0d0d0d" font-weight="bold" transform="rotate(-90 1228.6 417)">10</text>
<text x="1184.6" y="494.6" font-size="3.8" text-anchor="middle" fill="#0d0d0d">SEJOUR</text>
<text x="1185.6" y="504.4" font-size="3.4" text-anchor="middle" fill="#0d0d0d">S: 21.4m²</text>
<text x="1317.3" y="544" font-size="5.5" text-anchor="middle" fill="#0d0d0d" font-weight="bold" stroke="#fff" stroke-width="2.2" paint-order="stroke" transform="rotate(-90 1317.3 544)">500</text>
<text x="1303.6" y="564" font-size="5" text-anchor="middle" fill="#0d0d0d" font-weight="bold" transform="rotate(-90 1303.6 564)">7</text>
<text x="1402.4" y="524.4" font-size="3.4" text-anchor="middle" fill="#0d0d0d">PL</text>
<text x="1346" y="548" font-size="3.8" text-anchor="middle" fill="#0d0d0d">CUISINE</text>
<text x="1346" y="558" font-size="3.4" text-anchor="middle" fill="#0d0d0d">S: 5.08m²</text>
<text x="1351" y="475.9" font-size="5.5" text-anchor="middle" fill="#0d0d0d" font-weight="bold" stroke="#fff" stroke-width="2.2" paint-order="stroke">294</text>
<text x="896" y="520.5" font-size="4" text-anchor="middle" fill="#0d0d0d">V</text>
<text x="889.6" y="563.7" font-size="5.5" text-anchor="middle" fill="#0d0d0d" font-weight="bold" stroke="#fff" stroke-width="2.2" paint-order="stroke">10</text>
<text x="917" y="563.7" font-size="5.5" text-anchor="middle" fill="#0d0d0d" font-weight="bold" stroke="#fff" stroke-width="2.2" paint-order="stroke">277</text>
<text x="954.4" y="563.7" font-size="5.5" text-anchor="middle" fill="#0d0d0d" font-weight="bold" stroke="#fff" stroke-width="2.2" paint-order="stroke">7</text>
<text x="980" y="563.7" font-size="5.5" text-anchor="middle" fill="#0d0d0d" font-weight="bold" stroke="#fff" stroke-width="2.2" paint-order="stroke">115</text>
<text x="1004.6" y="563.7" font-size="5.5" text-anchor="middle" fill="#0d0d0d" font-weight="bold" stroke="#fff" stroke-width="2.2" paint-order="stroke">60</text>
<text x="898.6" y="552.6" font-size="3.4" text-anchor="middle" fill="#0d0d0d">SOUP</text>
<text x="915.6" y="625.8" font-size="5.5" text-anchor="middle" fill="#0d0d0d" font-weight="bold" stroke="#fff" stroke-width="2.2" paint-order="stroke">105</text>
<text x="932" y="625.8" font-size="5.5" text-anchor="middle" fill="#0d0d0d" font-weight="bold" stroke="#fff" stroke-width="2.2" paint-order="stroke">155</text>
<text x="984.6" y="625.8" font-size="5.5" text-anchor="middle" fill="#0d0d0d" font-weight="bold" stroke="#fff" stroke-width="2.2" paint-order="stroke">150</text>
<text x="920.6" y="637.4" font-size="5" text-anchor="middle" fill="#0d0d0d" font-weight="bold">7</text>
<text x="977" y="603.4" font-size="3.4" text-anchor="middle" fill="#0d0d0d">SDE+WC</text>
<text x="977" y="613.6" font-size="3.2" text-anchor="middle" fill="#0d0d0d">S: 5.67m²</text>
<text x="1001.4" y="579" font-size="3" text-anchor="middle" fill="#0d0d0d">PL</text>
<text x="1050.5" y="643" font-size="13" text-anchor="middle" fill="#333" stroke="#fff" stroke-width="2.2" paint-order="stroke">asc</text>
<text x="1028.9" y="628" font-size="5.5" text-anchor="middle" fill="#0d0d0d" font-weight="bold" stroke="#fff" stroke-width="2.2" paint-order="stroke" transform="rotate(-90 1028.9 628)">60</text>
<text x="1028.9" y="646" font-size="5.5" text-anchor="middle" fill="#0d0d0d" font-weight="bold" stroke="#fff" stroke-width="2.2" paint-order="stroke" transform="rotate(-90 1028.9 646)">160</text>
<text x="1036" y="564" font-size="3" text-anchor="middle" fill="#0d0d0d">RP</text>
<text x="1058" y="564" font-size="3" text-anchor="middle" fill="#0d0d0d">PLP</text>
<text x="1050" y="589.6" font-size="3.2" text-anchor="middle" fill="#0d0d0d">VU</text>
<text x="950.6" y="682.6" font-size="3.4" text-anchor="middle" fill="#0d0d0d">HALL</text>
<text x="1028.9" y="689" font-size="5.5" text-anchor="middle" fill="#0d0d0d" font-weight="bold" stroke="#fff" stroke-width="2.2" paint-order="stroke" transform="rotate(-90 1028.9 689)">150</text>
<text x="1038.4" y="685" font-size="9.4" text-anchor="start" fill="#444">2P</text>
<text x="1034.6" y="696.4" font-size="9.4" text-anchor="start" fill="#444">57.14m²</text>
<text x="1038.4" y="706.4" font-size="9.4" text-anchor="start" fill="#444">2.4</text>
<text x="968.4" y="707" font-size="9.4" text-anchor="start" fill="#444">3P</text>
<text x="901.4" y="716" font-size="9.4" text-anchor="start" fill="#444">2.2 b</text>
<text x="968" y="746.4" font-size="3.4" text-anchor="middle" fill="#0d0d0d">SDB</text>
<text x="967.6" y="753.4" font-size="3.2" text-anchor="middle" fill="#0d0d0d">S: 3.90m²</text>
<text x="1047.4" y="746.4" font-size="3.4" text-anchor="middle" fill="#0d0d0d">ENTREE</text>
<text x="1046" y="753.4" font-size="3.2" text-anchor="middle" fill="#0d0d0d">S: 3.98m²</text>
<text x="1090" y="722.4" font-size="3.2" text-anchor="middle" fill="#0d0d0d">PL</text>
<text x="1092" y="729" font-size="3" text-anchor="middle" fill="#0d0d0d">S: 0.51m²</text>
<text x="1115.6" y="580" font-size="3" text-anchor="middle" fill="#0d0d0d">+1</text>
<text x="1115.6" y="586.4" font-size="3" text-anchor="middle" fill="#0d0d0d">1.02m²</text>
<text x="1115.6" y="616" font-size="3" text-anchor="middle" fill="#0d0d0d">+1</text>
<text x="1115.6" y="622.4" font-size="3" text-anchor="middle" fill="#0d0d0d">1.02m²</text>
<text x="1422" y="581.4" font-size="3" text-anchor="middle" fill="#0d0d0d">+1</text>
<text x="1163.9" y="624" font-size="5.5" text-anchor="middle" fill="#0d0d0d" font-weight="bold" stroke="#fff" stroke-width="2.2" paint-order="stroke" transform="rotate(-90 1163.9 624)">285</text>
<text x="1163.9" y="689" font-size="5.5" text-anchor="middle" fill="#0d0d0d" font-weight="bold" stroke="#fff" stroke-width="2.2" paint-order="stroke" transform="rotate(-90 1163.9 689)">150</text>
<text x="1163.9" y="796" font-size="5.5" text-anchor="middle" fill="#0d0d0d" font-weight="bold" stroke="#fff" stroke-width="2.2" paint-order="stroke" transform="rotate(-90 1163.9 796)">627</text>
<text x="1151.6" y="653.4" font-size="4.6" text-anchor="middle" fill="#0d0d0d" font-weight="bold" transform="rotate(-90 1151.6 653.4)">60</text>
<text x="1151.6" y="697" font-size="4.6" text-anchor="middle" fill="#0d0d0d" font-weight="bold" transform="rotate(-90 1151.6 697)">10</text>
<text x="1261.9" y="622" font-size="5.5" text-anchor="middle" fill="#0d0d0d" font-weight="bold" stroke="#fff" stroke-width="2.2" paint-order="stroke" transform="rotate(-90 1261.9 622)">286</text>
<text x="1265.8" y="682.6" font-size="9.4" text-anchor="start" fill="#444">2.6</text>
<text x="1261.4" y="693.6" font-size="9.4" text-anchor="start" fill="#444">50.25m²</text>
<text x="1265.8" y="703" font-size="9.4" text-anchor="start" fill="#444">2P</text>
<text x="1273.4" y="633.8" font-size="5.5" text-anchor="middle" fill="#0d0d0d" font-weight="bold" stroke="#fff" stroke-width="2.2" paint-order="stroke">120</text>
<text x="1279" y="600" font-size="3.4" text-anchor="middle" fill="#0d0d0d">SDE+WC</text>
<text x="1279" y="609.4" font-size="3.2" text-anchor="middle" fill="#0d0d0d">S: 3.4m²</text>
<text x="1317.3" y="596" font-size="5.5" text-anchor="middle" fill="#0d0d0d" font-weight="bold" stroke="#fff" stroke-width="2.2" paint-order="stroke" transform="rotate(-90 1317.3 596)">100</text>
<text x="961" y="847.1" font-size="5.5" text-anchor="middle" fill="#0d0d0d" font-weight="bold" stroke="#fff" stroke-width="2.2" paint-order="stroke">10</text>
<text x="995" y="847.1" font-size="5.5" text-anchor="middle" fill="#0d0d0d" font-weight="bold" stroke="#fff" stroke-width="2.2" paint-order="stroke">328</text>
<text x="1059" y="847.1" font-size="5.5" text-anchor="middle" fill="#0d0d0d" font-weight="bold" stroke="#fff" stroke-width="2.2" paint-order="stroke">7</text>
<text x="1078.6" y="847.1" font-size="5.5" text-anchor="middle" fill="#0d0d0d" font-weight="bold" stroke="#fff" stroke-width="2.2" paint-order="stroke">230</text>
<text x="1187.6" y="847.1" font-size="5.5" text-anchor="middle" fill="#0d0d0d" font-weight="bold" stroke="#fff" stroke-width="2.2" paint-order="stroke">400</text>
<text x="1059.6" y="833.4" font-size="5.5" text-anchor="middle" fill="#0d0d0d" font-weight="bold">7</text>
<text x="1125.4" y="836" font-size="5.5" text-anchor="middle" fill="#0d0d0d" font-weight="bold">7</text>
<text x="989.6" y="820.4" font-size="3.4" text-anchor="middle" fill="#0d0d0d">CH1</text>
<text x="995" y="829.6" font-size="3.2" text-anchor="middle" fill="#0d0d0d">S: 11.14m²</text>
<text x="1070.6" y="820.4" font-size="3.4" text-anchor="middle" fill="#0d0d0d">CUISINE</text>
<text x="1071" y="829.6" font-size="3.2" text-anchor="middle" fill="#0d0d0d">S: 7.14m²</text>
<text x="1186" y="819" font-size="3.6" text-anchor="middle" fill="#0d0d0d">SEJOUR</text>
<text x="1187" y="829" font-size="3.4" text-anchor="middle" fill="#0d0d0d">S: 27.98m²</text>
<text x="903" y="850.4" font-size="3.4" text-anchor="middle" fill="#0d0d0d">CUISINE</text>
<text x="904" y="857" font-size="3.2" text-anchor="middle" fill="#0d0d0d">S: 9.41m²</text>
<text x="988" y="916" font-size="3.6" text-anchor="middle" fill="#0d0d0d">BALCON</text>
<text x="988" y="923" font-size="3.4" text-anchor="middle" fill="#0d0d0d">S: 4.48m²</text>
<text x="1205" y="916" font-size="3.6" text-anchor="middle" fill="#0d0d0d">BALCON</text>
<text x="1205" y="923" font-size="3.4" text-anchor="middle" fill="#0d0d0d">S: 4.48m²</text>
<text x="1309" y="840.6" font-size="3.4" text-anchor="middle" fill="#0d0d0d">CUISINE</text>
<text x="1309" y="848.6" font-size="3.2" text-anchor="middle" fill="#0d0d0d">S: 7.8m²</text>
<text x="729.5" y="466.6" font-size="5.5" text-anchor="middle" fill="#0d0d0d" font-weight="bold" stroke="#fff" stroke-width="2.2" paint-order="stroke" transform="rotate(-45 729.5 466.6)">250</text>
<text x="700.5" y="495.6" font-size="5.5" text-anchor="middle" fill="#0d0d0d" font-weight="bold" stroke="#fff" stroke-width="2.2" paint-order="stroke" transform="rotate(-45 700.5 495.6)">180</text>
<text x="665.5" y="530.5" font-size="5.5" text-anchor="middle" fill="#0d0d0d" font-weight="bold" stroke="#fff" stroke-width="2.2" paint-order="stroke" transform="rotate(-45 665.5 530.5)">250</text>
<text x="630" y="566" font-size="5.5" text-anchor="middle" fill="#0d0d0d" font-weight="bold" stroke="#fff" stroke-width="2.2" paint-order="stroke" transform="rotate(-45 630 566)">120</text>
<text x="595.5" y="600.5" font-size="5.5" text-anchor="middle" fill="#0d0d0d" font-weight="bold" stroke="#fff" stroke-width="2.2" paint-order="stroke" transform="rotate(-45 595.5 600.5)">830</text>
<text x="561" y="635" font-size="5.5" text-anchor="middle" fill="#0d0d0d" font-weight="bold" stroke="#fff" stroke-width="2.2" paint-order="stroke" transform="rotate(-45 561 635)">130</text>
<text x="535" y="661" font-size="5.5" text-anchor="middle" fill="#0d0d0d" font-weight="bold" stroke="#fff" stroke-width="2.2" paint-order="stroke" transform="rotate(-45 535 661)">190</text>
<text x="508.6" y="687.5" font-size="5.5" text-anchor="middle" fill="#0d0d0d" font-weight="bold" stroke="#fff" stroke-width="2.2" paint-order="stroke" transform="rotate(-45 508.6 687.5)">120</text>
<text x="464.1" y="732" font-size="5.5" text-anchor="middle" fill="#0d0d0d" font-weight="bold" stroke="#fff" stroke-width="2.2" paint-order="stroke" transform="rotate(-45 464.1 732)">285</text>
<text x="686" y="585.6" font-size="3.6" text-anchor="middle" fill="#0d0d0d">BALCON</text>
<text x="686" y="593" font-size="3.4" text-anchor="middle" fill="#0d0d0d">S: 5.09m²</text>
<text x="575" y="703.6" font-size="3.6" text-anchor="middle" fill="#0d0d0d">BALCON</text>
<text x="575" y="711" font-size="3.4" text-anchor="middle" fill="#0d0d0d">S: 7.08m²</text>
<text x="466" y="886.6" font-size="5.5" text-anchor="middle" fill="#0d0d0d" font-weight="bold" stroke="#fff" stroke-width="2.2" paint-order="stroke" transform="rotate(45 466 886.6)">120</text>
<text x="514" y="934.7" font-size="5.5" text-anchor="middle" fill="#0d0d0d" font-weight="bold" stroke="#fff" stroke-width="2.2" paint-order="stroke" transform="rotate(45 514 934.7)">985</text>
<text x="447.4" y="891.6" font-size="5.5" text-anchor="middle" fill="#0d0d0d" font-weight="bold" transform="rotate(45 447.4 891.6)">65</text>
<text x="737.5" y="664.5" font-size="5.5" text-anchor="middle" fill="#0d0d0d" font-weight="bold" stroke="#fff" stroke-width="2.2" paint-order="stroke" transform="rotate(-45 737.5 664.5)">360</text>
<text x="651" y="751" font-size="5.5" text-anchor="middle" fill="#0d0d0d" font-weight="bold" stroke="#fff" stroke-width="2.2" paint-order="stroke" transform="rotate(-45 651 751)">351</text>
<text x="586" y="816" font-size="5.5" text-anchor="middle" fill="#0d0d0d" font-weight="bold" stroke="#fff" stroke-width="2.2" paint-order="stroke" transform="rotate(-45 586 816)">350</text>
<text x="814.7" y="600.3" font-size="5.5" text-anchor="middle" fill="#0d0d0d" font-weight="bold" stroke="#fff" stroke-width="2.2" paint-order="stroke" transform="rotate(45 814.7 600.3)">435</text>
<text x="747.2" y="637.8" font-size="5.5" text-anchor="middle" fill="#0d0d0d" font-weight="bold" stroke="#fff" stroke-width="2.2" paint-order="stroke" transform="rotate(45 747.2 637.8)">254</text>
<text x="690.7" y="677.3" font-size="5.5" text-anchor="middle" fill="#0d0d0d" font-weight="bold" stroke="#fff" stroke-width="2.2" paint-order="stroke" transform="rotate(45 690.7 677.3)">254</text>
<text x="618.7" y="761.3" font-size="5.5" text-anchor="middle" fill="#0d0d0d" font-weight="bold" stroke="#fff" stroke-width="2.2" paint-order="stroke" transform="rotate(45 618.7 761.3)">254</text>
<text x="569.2" y="850.8" font-size="5.5" text-anchor="middle" fill="#0d0d0d" font-weight="bold" stroke="#fff" stroke-width="2.2" paint-order="stroke" transform="rotate(45 569.2 850.8)">405</text>
<text x="658.3" y="896.3" font-size="5.5" text-anchor="middle" fill="#0d0d0d" font-weight="bold" stroke="#fff" stroke-width="2.2" paint-order="stroke" transform="rotate(-45 658.3 896.3)">367</text>
<text x="672" y="666.6" font-size="3.4" text-anchor="middle" fill="#0d0d0d">PL</text>
<text x="676" y="682" font-size="3.2" text-anchor="middle" fill="#0d0d0d">S: 0.94m²</text>
<text x="700" y="713" font-size="3.4" text-anchor="middle" fill="#0d0d0d">PL</text>
<text x="704" y="719.6" font-size="3.2" text-anchor="middle" fill="#0d0d0d">S: 0.94m²</text>
<text x="716" y="647" font-size="3.4" text-anchor="middle" fill="#0d0d0d">CH3</text>
<text x="722" y="654.4" font-size="3.2" text-anchor="middle" fill="#0d0d0d">S: 12.11m²</text>
<text x="632" y="726" font-size="3.4" text-anchor="middle" fill="#0d0d0d">CH2</text>
<text x="638" y="733.4" font-size="3.2" text-anchor="middle" fill="#0d0d0d">S: 10.42m²</text>
<text x="598" y="840.6" font-size="3.4" text-anchor="middle" fill="#0d0d0d">CH1</text>
<text x="605" y="847" font-size="3.2" text-anchor="middle" fill="#0d0d0d">S: 10.11m²</text>
<text x="722" y="746" font-size="3.4" text-anchor="middle" fill="#0d0d0d">DGT</text>
<text x="727" y="753" font-size="3.2" text-anchor="middle" fill="#0d0d0d">S: 7.15m²</text>
<text x="789" y="701" font-size="3.4" text-anchor="middle" fill="#0d0d0d">DGT</text>
<text x="737" y="795" font-size="3.4" text-anchor="middle" fill="#0d0d0d">SDB</text>
<text x="741" y="802" font-size="3.2" text-anchor="middle" fill="#0d0d0d">S: 6.7m²</text>
<text x="845" y="775" font-size="3.4" text-anchor="middle" fill="#0d0d0d">SDE+WC</text>
<text x="846" y="783" font-size="3.2" text-anchor="middle" fill="#0d0d0d">S: 4.11m²</text>
<text x="809.5" y="745.5" font-size="5.5" text-anchor="middle" fill="#0d0d0d" font-weight="bold" stroke="#fff" stroke-width="2.2" paint-order="stroke" transform="rotate(-45 809.5 745.5)">67</text>
<text x="818.7" y="801.3" font-size="5.5" text-anchor="middle" fill="#0d0d0d" font-weight="bold" stroke="#fff" stroke-width="2.2" paint-order="stroke" transform="rotate(45 818.7 801.3)">105</text>
<text x="857.2" y="862.8" font-size="5.5" text-anchor="middle" fill="#0d0d0d" font-weight="bold" stroke="#fff" stroke-width="2.2" paint-order="stroke" transform="rotate(45 857.2 862.8)">240</text>
<text x="891.3" y="821.3" font-size="5.5" text-anchor="middle" fill="#0d0d0d" font-weight="bold" stroke="#fff" stroke-width="2.2" paint-order="stroke" transform="rotate(-45 891.3 821.3)">390</text>
<text x="793.7" y="946.3" font-size="5.5" text-anchor="middle" fill="#0d0d0d" font-weight="bold" stroke="#fff" stroke-width="2.2" paint-order="stroke" transform="rotate(45 793.7 946.3)">695</text>
<text x="676.5" y="831.5" font-size="5.5" text-anchor="middle" fill="#0d0d0d" font-weight="bold" stroke="#fff" stroke-width="2.2" paint-order="stroke" transform="rotate(45 676.5 831.5)">120</text>
<text x="700.5" y="855.5" font-size="5.5" text-anchor="middle" fill="#0d0d0d" font-weight="bold" stroke="#fff" stroke-width="2.2" paint-order="stroke" transform="rotate(45 700.5 855.5)">254</text>
<text x="729.8" y="819.8" font-size="5.5" text-anchor="middle" fill="#0d0d0d" font-weight="bold" stroke="#fff" stroke-width="2.2" paint-order="stroke" transform="rotate(-45 729.8 819.8)">284</text>
<text x="880" y="739.6" font-size="9" text-anchor="start" fill="#444" transform="rotate(-45 880 739.6)">2.3</text>
<text x="893.6" y="738.6" font-size="3" text-anchor="middle" fill="#0d0d0d">+1</text>
<text x="894" y="745" font-size="3" text-anchor="middle" fill="#0d0d0d">11.1m²</text>
<text x="881" y="664" font-size="5.5" text-anchor="middle" fill="#0d0d0d" font-weight="bold" stroke="#fff" stroke-width="2.2" paint-order="stroke" transform="rotate(45 881 664)">163</text>
<text x="811" y="701" font-size="5.5" text-anchor="middle" fill="#0d0d0d" font-weight="bold" stroke="#fff" stroke-width="2.2" paint-order="stroke" transform="rotate(45 811 701)">256</text>
<text x="1408" y="658" font-size="5.5" text-anchor="middle" fill="#0d0d0d" font-weight="bold" stroke="#fff" stroke-width="2.2" paint-order="stroke" transform="rotate(-45 1408 658)">49</text>
<text x="1405" y="600.6" font-size="3.6" text-anchor="middle" fill="#0d0d0d">CH1</text>
<text x="1413" y="610" font-size="3.4" text-anchor="middle" fill="#0d0d0d">S: 11.86m²</text>
<text x="1353.5" y="687.5" font-size="5.5" text-anchor="middle" fill="#0d0d0d" font-weight="bold" stroke="#fff" stroke-width="2.2" paint-order="stroke" transform="rotate(-45 1353.5 687.5)">65</text>
<text x="1297" y="716" font-size="9" text-anchor="start" fill="#444" transform="rotate(45 1297 716)">111.58m²</text>
<text x="1289" y="722" font-size="9" text-anchor="start" fill="#444" transform="rotate(45 1289 722)">4P</text>
<text x="1311" y="738" font-size="9" text-anchor="start" fill="#444" transform="rotate(45 1311 738)">2.5</text>
<text x="1272" y="737" font-size="3.2" text-anchor="middle" fill="#0d0d0d">PL</text>
<text x="1275" y="744" font-size="3" text-anchor="middle" fill="#0d0d0d">S: 1.08m²</text>
<text x="1270" y="773" font-size="3.2" text-anchor="middle" fill="#0d0d0d">PL</text>
<text x="1310.3" y="799.7" font-size="5.5" text-anchor="middle" fill="#0d0d0d" font-weight="bold" stroke="#fff" stroke-width="2.2" paint-order="stroke" transform="rotate(45 1310.3 799.7)">697</text>
<text x="1367" y="848" font-size="5" text-anchor="middle" fill="#0d0d0d" font-weight="bold">7</text>
<text x="1378" y="800" font-size="3.4" text-anchor="middle" fill="#0d0d0d">ENTREE</text>
<text x="1379" y="807" font-size="3.2" text-anchor="middle" fill="#0d0d0d">S: 5.66m²</text>
<text x="1350" y="821.4" font-size="3" text-anchor="middle" fill="#0d0d0d">Coul.el.invest</text>
<text x="1415" y="735" font-size="5.5" text-anchor="middle" fill="#0d0d0d" font-weight="bold" stroke="#fff" stroke-width="2.2" paint-order="stroke" transform="rotate(45 1415 735)">100</text>
<text x="1398" y="869" font-size="3.6" text-anchor="middle" fill="#0d0d0d">SEJOUR</text>
<text x="1399" y="877" font-size="3.4" text-anchor="middle" fill="#0d0d0d">S: 40.94m²</text>
<text x="1424" y="578" font-size="3" text-anchor="middle" fill="#0d0d0d">+1</text>
<text x="360" y="957" font-size="8.8" text-anchor="start" fill="#222">Mr. D. CHEVALIER</text>
<!-- command line overlay -->
<rect x="719" y="935" width="709" height="25" fill="#ffffff" fill-opacity=".8"/>
<path d="M663 960 V939 a4 4 0 0 1 4 -4 H1428" stroke="#6b7280" stroke-width="1" fill="none"/>
<path d="M663 960 V939 a4 4 0 0 1 4 -4 H719.5 V960 Z" fill="#6b7280"/>
<path d="M667.5 940 v17 M670 940 v17" stroke="#c9cdd3" stroke-width="1" stroke-dasharray="1 1.4"/>
<path d="M678 942.6 l8 8 M686 942.6 l-8 8" stroke="#fff" stroke-width="1.7"/>
<path d="M700 953 l7.4 -7.4" stroke="#fff" stroke-width="2.6" stroke-linecap="round"/>
<path d="M706.4 946.8 a3.6 3.6 0 0 1 2.6 -6 l-1.6 2.6 1.6 1.8 2.8 -1.2 a3.6 3.6 0 0 1 -5.4 2.8z" fill="#fff"/>
<rect x="723.5" y="941.5" width="15" height="11" fill="#eef0f2" stroke="#8a909b" stroke-width="1"/>
<rect x="723.5" y="941.5" width="15" height="2.6" fill="#8a909b"/>
<path d="M741.6 946.4 l3 3.4 3 -3.4z" fill="#6b7280"/>
<text x="756" y="952" font-family="Liberation Mono, monospace" font-style="italic" font-size="12.4" fill="#9aa0a8" textLength="135" lengthAdjust="spacingAndGlyphs">Entrez une commande</text>

</svg>
</div>

<div id="layoutbar">
<div class="abs" style="left:0;top:-960px;width:1428px;height:987px">
<div class="abs" style="left:0;top:960px;width:1428px;height:4px;background:#3b4453"></div>
<div class="abs" style="left:1422px;top:966px;width:6px;height:21px;background:#3b4453"></div>
<div class="abs" style="left:1426.6px;top:974px;width:2px;height:9px;background:#b9cfe8"></div>
<svg width="400" height="987" viewBox="0 0 400 987" style="left:0;top:0" fill="none">
<path d="M94.6 987 L104.2 964 H143.6 L134 987 Z" fill="#3b4453"/>
<path d="M15.6 970.6 H32.4 M15.6 976.2 H32.4 M15.6 981.8 H32.4" stroke="#e8eaed" stroke-width="1.9"/>
<path d="M44.4 984 L49.2 968.6 M177.4 984 L182.2 968.6" stroke="#5b6473" stroke-width="1"/>
<path d="M152.6 976.6 H167 M159.8 969.4 V983.8" stroke="#f1f2f4" stroke-width="2"/>
</svg>
<span class="t" style="left:58px;top:969.5px;color:#d9dce1;letter-spacing:.1px">Objet</span>
<span class="t" style="left:111.6px;top:969.5px;color:#fff;font-weight:bold;letter-spacing:-.5px">R2</span>
</div>

</div>

</body>
</html>
